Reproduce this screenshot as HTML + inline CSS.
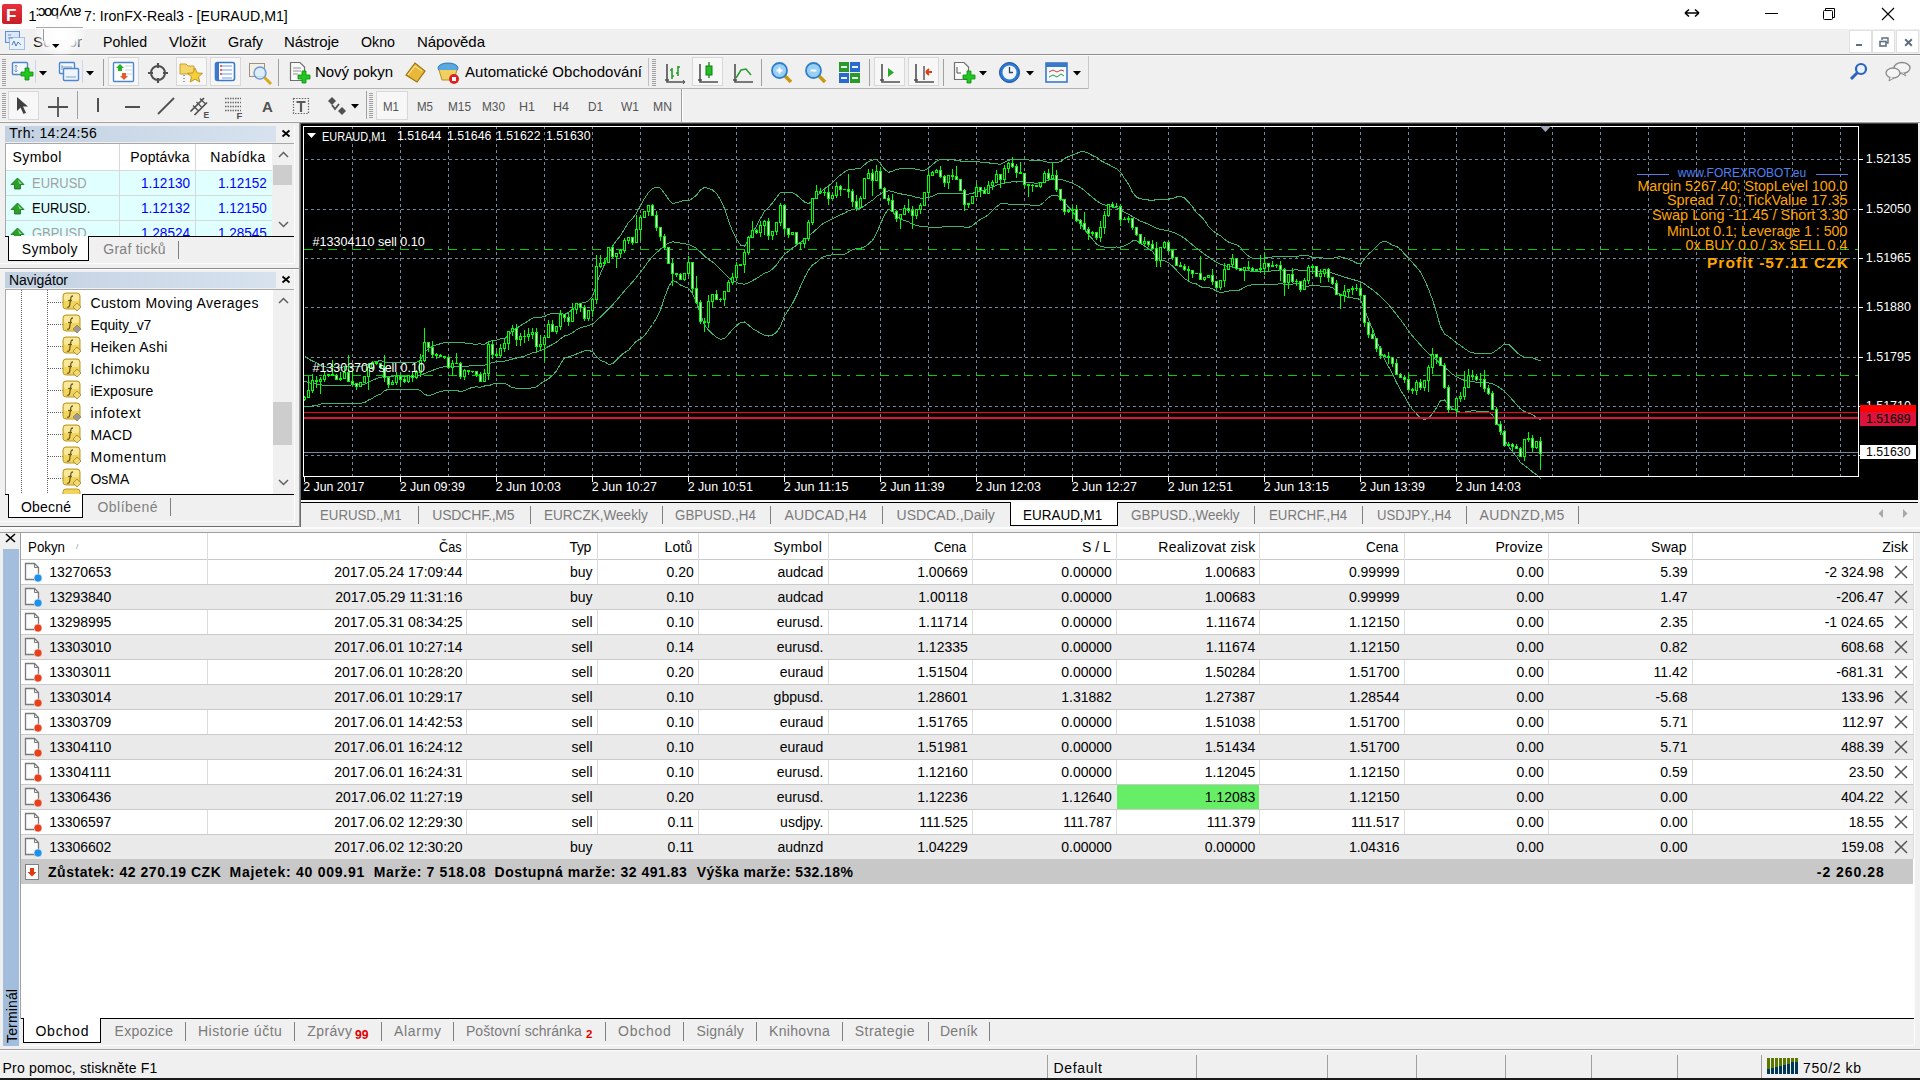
<!DOCTYPE html><html><head><meta charset="utf-8"><style>*{margin:0;padding:0;box-sizing:border-box}
html,body{width:1920px;height:1080px;overflow:hidden}
body{background:#f0f0f0;position:relative;font-family:"Liberation Sans",sans-serif;font-size:14px;color:#000}
.a{position:absolute;white-space:nowrap;line-height:1}
.r{position:absolute}
svg{position:absolute;overflow:visible}
</style></head><body><div class="r" style="left:0px;top:0px;width:1920px;height:29px;background:#fff;"></div>
<div class="r" style="left:2px;top:4px;width:20px;height:20px;background:linear-gradient(#e8303a,#c81e28);border-radius:2px;"></div>
<div class="a" style="left:6.00px;top:6.61px;font-size:17px;color:#fff;font-weight:bold;">F</div>
<div class="a" style="left:28.30px;top:7.60px;font-size:15px;color:#000;">1</div>
<div class="a" style="left:36.5px;top:5.5px;font-size:15px;height:15px;letter-spacing:-1.6px;transform:rotate(180deg);color:#000">boc:</div>
<div class="a" style="left:59.5px;top:5.5px;font-size:15px;height:15px;letter-spacing:-0.6px;transform:rotate(180deg);color:#000">avy</div>
<div class="a" style="left:83.70px;top:7.60px;font-size:15px;transform-origin:0 0;transform:scaleX(0.9440);color:#000;">7: IronFX-Real3 - [EURAUD,M1]</div>
<svg style="left:1684px;top:8px" width="16" height="10" viewBox="0 0 16 10" ><path d="M1 5H15M1 5L5 1.5M1 5L5 8.5M15 5L11 1.5M15 5L11 8.5" stroke="#000" stroke-width="1.6" fill="none"/></svg><div class="r" style="left:1765px;top:13px;width:13px;height:1px;background:#000;"></div><svg style="left:1822px;top:7px" width="14" height="14" viewBox="0 0 14 14" ><path d="M3.5 3.5V1.5H12.5V10.5H10.5" stroke="#000" fill="none"/><rect x="1.5" y="3.5" width="9" height="9" rx="1" stroke="#000" fill="none"/></svg><svg style="left:1881px;top:7px" width="14" height="14" viewBox="0 0 14 14" ><path d="M1 1L13 13M13 1L1 13" stroke="#000" stroke-width="1.1" fill="none"/></svg>
<div class="r" style="left:30px;top:15px;width:60px;height:40px;background:radial-gradient(ellipse 26px 22px at 30px 20px,rgba(255,255,255,1) 0%,rgba(252,252,252,1) 60%,rgba(240,240,240,0) 100%);z-index:5;"></div>
<div class="r" style="left:36px;top:27px;width:47px;height:1px;background:#a8a8a8;z-index:6;"></div>
<div class="r" style="left:43px;top:29px;width:1px;height:12px;background:#9a9a9a;z-index:6;"></div>
<svg style="left:52px;top:44px;z-index:6" width="8" height="5" viewBox="0 0 8 5"><path d="M0 0H7.5L3.75 4Z" fill="#000"/></svg>
<div class="r" style="left:0px;top:54px;width:1920px;height:1px;background:#8e8e8e;"></div>
<div class="r" style="left:0px;top:55px;width:1920px;height:1px;background:#fbfbfb;"></div>
<svg style="left:4px;top:30px" width="24" height="22" viewBox="0 0 24 22" ><rect x="1.5" y="1.5" width="14" height="11" fill="#dbe7f7" stroke="#5b8fd6"/><rect x="5.5" y="7.5" width="15" height="12" fill="#e8f0fb" stroke="#5b8fd6" stroke-dasharray="1 1"/><path d="M8 15L10 11L12 16L14 12L17 15" stroke="#4a7cc4" fill="none"/><path d="M4 5H7M4 8H9" stroke="#6a90c0"/></svg>
<div class="a" style="left:33.00px;top:34.30px;font-size:15px;color:#000;letter-spacing:0.130px;">Soubor</div>
<div class="a" style="left:103.00px;top:34.30px;font-size:15px;transform-origin:0 0;transform:scaleX(0.9422);color:#000;">Pohled</div>
<div class="a" style="left:169.00px;top:34.30px;font-size:15px;color:#000;letter-spacing:0.060px;">Vložit</div>
<div class="a" style="left:228.00px;top:34.30px;font-size:15px;transform-origin:0 0;transform:scaleX(0.9550);color:#000;">Grafy</div>
<div class="a" style="left:284.00px;top:34.30px;font-size:15px;color:#000;letter-spacing:-0.121px;">Nástroje</div>
<div class="a" style="left:361.00px;top:34.30px;font-size:15px;transform-origin:0 0;transform:scaleX(0.9484);color:#000;">Okno</div>
<div class="a" style="left:417.00px;top:34.30px;font-size:15px;color:#000;letter-spacing:-0.057px;">Nápověda</div>
<div class="r" style="left:1849px;top:30px;width:23px;height:23px;background:#fff;border:1px solid #e0e0e0;"></div><div class="r" style="left:1872px;top:30px;width:23px;height:23px;background:#fff;border:1px solid #e0e0e0;"></div><div class="r" style="left:1896px;top:30px;width:23px;height:23px;background:#fff;border:1px solid #e0e0e0;"></div><div class="r" style="left:1856px;top:44px;width:6px;height:2px;background:#5f6f80;"></div><svg style="left:1879px;top:37px" width="10" height="10" viewBox="0 0 10 10" ><rect x="1" y="4.5" width="6" height="4.5" fill="none" stroke="#5f6f80" stroke-width="1.6"/><path d="M3 3V1H9V6H7.5" fill="none" stroke="#5f6f80" stroke-width="1.4"/></svg><svg style="left:1904px;top:38px" width="9" height="9" viewBox="0 0 9 9" ><path d="M1.2 1.2L7.8 7.8M7.8 1.2L1.2 7.8" stroke="#5f6f80" stroke-width="2"/></svg>
<div class="r" style="left:0px;top:88px;width:1089px;height:1px;background:#b4b4b4;"></div>
<div class="r" style="left:0px;top:121px;width:1920px;height:1px;background:#f8f8f8;"></div>
<div class="r" style="left:0px;top:122px;width:1920px;height:1px;background:#a0a0a0;"></div>
<div class="r" style="left:1088px;top:56px;width:1px;height:33px;background:#c8c8c8;"></div><svg style="left:2px;top:59px" width="5" height="27" viewBox="0 0 5 27" ><rect x="0" y="0" width="4" height="1" fill="#a0a0a0"/><rect x="0" y="2" width="4" height="1" fill="#a0a0a0"/><rect x="0" y="4" width="4" height="1" fill="#a0a0a0"/><rect x="0" y="6" width="4" height="1" fill="#a0a0a0"/><rect x="0" y="8" width="4" height="1" fill="#a0a0a0"/><rect x="0" y="10" width="4" height="1" fill="#a0a0a0"/><rect x="0" y="12" width="4" height="1" fill="#a0a0a0"/><rect x="0" y="14" width="4" height="1" fill="#a0a0a0"/><rect x="0" y="16" width="4" height="1" fill="#a0a0a0"/><rect x="0" y="18" width="4" height="1" fill="#a0a0a0"/><rect x="0" y="20" width="4" height="1" fill="#a0a0a0"/><rect x="0" y="22" width="4" height="1" fill="#a0a0a0"/><rect x="0" y="24" width="4" height="1" fill="#a0a0a0"/><rect x="0" y="26" width="4" height="1" fill="#a0a0a0"/></svg><svg style="left:11px;top:61px" width="24" height="22" viewBox="0 0 24 22" ><rect x="1.5" y="1.5" width="15" height="12" rx="1" fill="#f4f8fd" stroke="#4f86cf" stroke-width="1.4"/><path d="M5 4V11M3.5 5.5L5 4L6.5 5.5M3.5 9.5L5 11L6.5 9.5" stroke="#7a9cc8" fill="none"/><path d="M14 7H18V11H22V15H18V19H14V15H10V11H14Z" fill="#1ec81e" stroke="#0c8a0c" stroke-width="0.8"/></svg><div class="r" style="left:35px;top:60px;width:1px;height:23px;background:#c8d8ec;"></div><svg style="left:39px;top:71px" width="8" height="5" viewBox="0 0 8 5" ><path d="M0 0H8L4 4.5Z" fill="#000"/></svg><svg style="left:58px;top:61px" width="24" height="22" viewBox="0 0 24 22" ><rect x="1.5" y="1.5" width="15" height="11" rx="1" fill="#f4f8fd" stroke="#4f86cf" stroke-width="1.4"/><rect x="5.5" y="7.5" width="15" height="12" rx="1" fill="#eef4fc" stroke="#4f86cf" stroke-width="1.4"/><path d="M4 4V9M4 6H14M8 16H18" stroke="#7a9cc8" fill="none"/></svg><div class="r" style="left:82px;top:60px;width:1px;height:23px;background:#c8d8ec;"></div><svg style="left:86px;top:71px" width="8" height="5" viewBox="0 0 8 5" ><path d="M0 0H8L4 4.5Z" fill="#000"/></svg><div class="r" style="left:103px;top:59px;width:1px;height:27px;background:#a0a0a0;"></div><div class="r" style="left:108px;top:57px;width:31px;height:29px;background:#f7f7f7;border:1px solid #d8d8d8;"></div><svg style="left:113px;top:62px" width="21" height="21" viewBox="0 0 21 21" ><rect x="0.5" y="0.5" width="20" height="19" rx="1" fill="#fbfdff" stroke="#4f86cf" stroke-width="1.4"/><path d="M12 4H19M12 8H19M12 12H19" stroke="#c8d4e4"/><path d="M7 2L11 6H9V9H5V6H3Z" fill="#22b422"/><path d="M11 18L15 14H13V11H9V14H7Z" fill="#e85a2a"/></svg><svg style="left:147px;top:62px" width="22" height="22" viewBox="0 0 22 22" ><circle cx="11" cy="11" r="7" fill="none" stroke="#505050" stroke-width="2"/><path d="M11 1V6M11 16V21M1 11H6M16 11H21" stroke="#505050" stroke-width="2.2"/></svg><div class="r" style="left:176px;top:57px;width:31px;height:29px;background:#f7f7f7;border:1px solid #d8d8d8;"></div><svg style="left:179px;top:61px" width="25" height="24" viewBox="0 0 25 24" ><path d="M1 3H7L9 5H15V13H1Z" fill="#f5d66a" stroke="#c8a030"/><path d="M5 14V22" stroke="#444" stroke-dasharray="1 2"/><path d="M16 7L18.3 12L23.5 12.3L19.5 15.8L20.8 21L16 18.2L11.2 21L12.5 15.8L8.5 12.3L13.7 12Z" fill="#f4cf3a" stroke="#b8901c" stroke-width="0.9"/></svg><div class="r" style="left:210px;top:57px;width:31px;height:29px;background:#f7f7f7;border:1px solid #d8d8d8;"></div><svg style="left:214px;top:61px" width="23" height="22" viewBox="0 0 23 22" ><rect x="1.5" y="1.5" width="19" height="18" rx="2" fill="#fafcff" stroke="#3c78c8" stroke-width="1.6"/><rect x="2" y="2" width="3" height="17" fill="#3c78c8"/><path d="M8 5H18M8 9H18M8 13H18M8 17H18" stroke="#7aa0d8"/><path d="M6 5H8M6 9H8M6 13H8" stroke="#e03030" stroke-width="1.4"/></svg><svg style="left:248px;top:62px" width="25" height="23" viewBox="0 0 25 23" ><rect x="1.5" y="1.5" width="15" height="13" fill="#f4f0e8" stroke="#a09080"/><circle cx="12" cy="11" r="6" fill="#d8ecff" fill-opacity="0.8" stroke="#6a9ad0" stroke-width="1.4"/><path d="M16.5 15.5L23 22" stroke="#d8a820" stroke-width="3"/></svg><div class="r" style="left:278px;top:59px;width:1px;height:27px;background:#a0a0a0;"></div><svg style="left:289px;top:61px" width="23" height="24" viewBox="0 0 23 24" ><path d="M1.5 1.5H11L15.5 6V19.5H1.5Z" fill="#fafafa" stroke="#707070" stroke-width="1.2"/><path d="M4 7H12M4 10H12M4 13H9" stroke="#909090"/><path d="M13 10H17V14H21V18H17V22H13V18H9V14H13Z" fill="#1ec81e" stroke="#0c8a0c" stroke-width="0.8"/></svg><div class="a" style="left:315.00px;top:64.30px;font-size:15px;color:#000;letter-spacing:-0.039px;">Nový pokyn</div><svg style="left:404px;top:61px" width="23" height="22" viewBox="0 0 23 22" ><path d="M2 14L11 2L21 10L13 21Z" fill="#e8b838" stroke="#a07010" stroke-width="1.2"/><path d="M4 14L11 5L18 10" fill="none" stroke="#fff0b0"/></svg><svg style="left:436px;top:61px" width="25" height="24" viewBox="0 0 25 24" ><ellipse cx="12" cy="7" rx="10" ry="5" fill="#5aa8e0" stroke="#2a78b8"/><path d="M3 9L6 19H18L21 9" fill="#f0d060" stroke="#b89020"/><circle cx="18" cy="18" r="5" fill="#e02020"/><rect x="16" y="16" width="4" height="4" fill="#fff"/></svg><div class="a" style="left:465.00px;top:64.30px;font-size:15px;color:#000;letter-spacing:0.048px;">Automatické Obchodování</div><div class="r" style="left:648px;top:58px;width:1px;height:28px;background:#c0c0c0;"></div><svg style="left:652px;top:59px" width="5" height="27" viewBox="0 0 5 27" ><rect x="0" y="0" width="4" height="1" fill="#a0a0a0"/><rect x="0" y="2" width="4" height="1" fill="#a0a0a0"/><rect x="0" y="4" width="4" height="1" fill="#a0a0a0"/><rect x="0" y="6" width="4" height="1" fill="#a0a0a0"/><rect x="0" y="8" width="4" height="1" fill="#a0a0a0"/><rect x="0" y="10" width="4" height="1" fill="#a0a0a0"/><rect x="0" y="12" width="4" height="1" fill="#a0a0a0"/><rect x="0" y="14" width="4" height="1" fill="#a0a0a0"/><rect x="0" y="16" width="4" height="1" fill="#a0a0a0"/><rect x="0" y="18" width="4" height="1" fill="#a0a0a0"/><rect x="0" y="20" width="4" height="1" fill="#a0a0a0"/><rect x="0" y="22" width="4" height="1" fill="#a0a0a0"/><rect x="0" y="24" width="4" height="1" fill="#a0a0a0"/><rect x="0" y="26" width="4" height="1" fill="#a0a0a0"/></svg><svg style="left:664px;top:63px" width="22" height="21" viewBox="0 0 22 21" ><path d="M3 1V19H21M1 17H5" stroke="#505050" stroke-width="1.6" fill="none"/><path d="M8 5V16M6 7H8M8 13H10M14 3V13M12 10H14M14 4H16" stroke="#2a9a2a" stroke-width="1.6" fill="none"/><path d="M19 17L21 19L19 21" stroke="#505050" fill="none"/></svg><div class="r" style="left:692px;top:57px;width:31px;height:29px;background:#f7f7f7;border:1px solid #d8d8d8;"></div><svg style="left:697px;top:61px" width="22" height="23" viewBox="0 0 22 23" ><path d="M3 3V21H21M1 19H5" stroke="#505050" stroke-width="1.6" fill="none"/><path d="M12 1V17" stroke="#1a8a1a" stroke-width="1.4"/><rect x="9" y="5" width="6" height="9" fill="#22c022" stroke="#138013"/></svg><svg style="left:732px;top:63px" width="22" height="21" viewBox="0 0 22 21" ><path d="M3 1V19H21M1 17H5" stroke="#505050" stroke-width="1.6" fill="none"/><path d="M4 15L9 7L14 6L19 12" stroke="#2a9a2a" stroke-width="1.5" fill="none"/></svg><div class="r" style="left:761px;top:59px;width:1px;height:27px;background:#a0a0a0;"></div><svg style="left:770px;top:61px" width="23" height="23" viewBox="0 0 23 23" ><path d="M14 14L21 21" stroke="#c89810" stroke-width="3.5"/><circle cx="9.5" cy="9.5" r="7.5" fill="#9ad0f4" stroke="#2f7fc8" stroke-width="1.8"/><path d="M6.5 9.5H12.5M9.5 6.5V12.5" stroke="#fff" stroke-width="2"/></svg><svg style="left:804px;top:61px" width="23" height="23" viewBox="0 0 23 23" ><path d="M14 14L21 21" stroke="#c89810" stroke-width="3.5"/><circle cx="9.5" cy="9.5" r="7.5" fill="#9ad0f4" stroke="#2f7fc8" stroke-width="1.8"/><path d="M6.5 9.5H12.5" stroke="#fff" stroke-width="2"/></svg><svg style="left:838px;top:61px" width="23" height="23" viewBox="0 0 23 23" ><rect x="1" y="1" width="10" height="10" fill="#2a9a2a"/><rect x="12" y="1" width="10" height="10" fill="#2a6ad0"/><rect x="1" y="12" width="10" height="10" fill="#2a6ad0"/><rect x="12" y="12" width="10" height="10" fill="#2a9a2a"/><path d="M3 6H9M14 6H20M3 17H9M14 17H20" stroke="#e8f4e8" stroke-width="1.8"/></svg><div class="r" style="left:869px;top:59px;width:1px;height:27px;background:#a0a0a0;"></div><div class="r" style="left:874px;top:57px;width:31px;height:29px;background:#f7f7f7;border:1px solid #d8d8d8;"></div><svg style="left:879px;top:63px" width="22" height="21" viewBox="0 0 22 21" ><path d="M3 1V19H21M1 17H5" stroke="#505050" stroke-width="1.6" fill="none"/><path d="M9 5V14L15 9.5Z" fill="#2aaa2a"/></svg><div class="r" style="left:908px;top:57px;width:31px;height:29px;background:#f7f7f7;border:1px solid #d8d8d8;"></div><svg style="left:913px;top:63px" width="22" height="21" viewBox="0 0 22 21" ><path d="M3 1V19H21M1 17H5" stroke="#505050" stroke-width="1.6" fill="none"/><path d="M11 3V17" stroke="#505050" stroke-width="1.4"/><path d="M19 9H13M13 9L16 6M13 9L16 12" stroke="#e03a10" stroke-width="1.8" fill="none"/></svg><div class="r" style="left:943px;top:59px;width:1px;height:27px;background:#a0a0a0;"></div><svg style="left:953px;top:61px" width="24" height="24" viewBox="0 0 24 24" ><path d="M1.5 1.5H11L15.5 6V18.5H1.5Z" fill="#fafafa" stroke="#707070" stroke-width="1.2"/><path d="M4 6V12H8" stroke="#505050" fill="none"/><path d="M14 10H18V14H22V18H18V22H14V18H10V14H14Z" fill="#1ec81e" stroke="#0c8a0c" stroke-width="0.8"/></svg><svg style="left:979px;top:71px" width="8" height="5" viewBox="0 0 8 5" ><path d="M0 0H8L4 4.5Z" fill="#000"/></svg><svg style="left:998px;top:61px" width="23" height="23" viewBox="0 0 23 23" ><circle cx="11.5" cy="11.5" r="10" fill="#2a7ad8" stroke="#1a4a90"/><circle cx="11.5" cy="11.5" r="7" fill="#f0f6ff"/><path d="M11.5 6V11.5H15" stroke="#404040" stroke-width="1.3" fill="none"/></svg><svg style="left:1026px;top:71px" width="8" height="5" viewBox="0 0 8 5" ><path d="M0 0H8L4 4.5Z" fill="#000"/></svg><svg style="left:1045px;top:62px" width="23" height="21" viewBox="0 0 23 21" ><rect x="1" y="1" width="21" height="19" fill="#f4f8ff" stroke="#3a78c8" stroke-width="1.6"/><rect x="1" y="1" width="21" height="4" fill="#3a78c8"/><path d="M4 10L8 8L12 10L16 8L19 9" stroke="#d04020" fill="none"/><path d="M4 15L8 13L12 15L16 12L19 14" stroke="#2a9a2a" fill="none"/></svg><svg style="left:1073px;top:71px" width="8" height="5" viewBox="0 0 8 5" ><path d="M0 0H8L4 4.5Z" fill="#000"/></svg><svg style="left:1849px;top:62px" width="19" height="19" viewBox="0 0 19 19" ><circle cx="12" cy="7" r="5" fill="#eaf2ff" stroke="#2a62c0" stroke-width="2.2"/><path d="M8.5 10.5L2 17" stroke="#2a62c0" stroke-width="3"/></svg><svg style="left:1884px;top:61px" width="28" height="21" viewBox="0 0 28 21" ><ellipse cx="18" cy="7" rx="8" ry="5.5" fill="#f4f4f4" stroke="#8a8a8a" stroke-width="1.3"/><path d="M20 12L22 15L17 12" fill="#f4f4f4" stroke="#8a8a8a"/><ellipse cx="9" cy="12" rx="7" ry="5" fill="#f4f4f4" stroke="#8a8a8a" stroke-width="1.3"/><path d="M6 16L5 20L10 17" fill="#f4f4f4" stroke="#8a8a8a"/></svg>
<div class="r" style="left:681px;top:89px;width:1px;height:33px;background:#a0a0a0;"></div><div class="r" style="left:682px;top:89px;width:1px;height:33px;background:#fff;"></div><svg style="left:2px;top:93px" width="5" height="26" viewBox="0 0 5 26" ><rect x="0" y="0" width="4" height="1" fill="#a0a0a0"/><rect x="0" y="2" width="4" height="1" fill="#a0a0a0"/><rect x="0" y="4" width="4" height="1" fill="#a0a0a0"/><rect x="0" y="6" width="4" height="1" fill="#a0a0a0"/><rect x="0" y="8" width="4" height="1" fill="#a0a0a0"/><rect x="0" y="10" width="4" height="1" fill="#a0a0a0"/><rect x="0" y="12" width="4" height="1" fill="#a0a0a0"/><rect x="0" y="14" width="4" height="1" fill="#a0a0a0"/><rect x="0" y="16" width="4" height="1" fill="#a0a0a0"/><rect x="0" y="18" width="4" height="1" fill="#a0a0a0"/><rect x="0" y="20" width="4" height="1" fill="#a0a0a0"/><rect x="0" y="22" width="4" height="1" fill="#a0a0a0"/><rect x="0" y="24" width="4" height="1" fill="#a0a0a0"/></svg><div class="r" style="left:8px;top:91px;width:31px;height:29px;background:#f7f7f7;border:1px solid #d8d8d8;"></div><svg style="left:14px;top:96px" width="16" height="20" viewBox="0 0 16 20" ><path d="M3 1L3 15L6.5 11.5L9.5 18L12 16.8L9 10.5H14Z" fill="#404040"/></svg><svg style="left:47px;top:96px" width="22" height="22" viewBox="0 0 22 22" ><path d="M11 1V21M1 11H21" stroke="#505050" stroke-width="1.8"/></svg><div class="r" style="left:77px;top:91px;width:1px;height:28px;background:#a0a0a0;"></div><div class="r" style="left:97px;top:98px;width:2px;height:14px;background:#505050;"></div><div class="r" style="left:125px;top:106px;width:15px;height:2px;background:#505050;"></div><svg style="left:157px;top:97px" width="18" height="18" viewBox="0 0 18 18" ><path d="M1 17L17 1" stroke="#505050" stroke-width="1.8"/></svg><svg style="left:189px;top:96px" width="22" height="23" viewBox="0 0 22 23" ><path d="M1.5 15.5L15 2M5.5 19L18 6.5" stroke="#505050" stroke-width="1.7"/><path d="M4 9.5L9 14.5M7.5 6L12.5 11M11 2.5L16 7.5" stroke="#505050" stroke-width="1.3"/><text x="14.5" y="22" font-size="8.5" font-weight="bold" fill="#505050" font-family="Liberation Sans">E</text></svg><svg style="left:224px;top:96px" width="22" height="24" viewBox="0 0 22 24" ><path d="M1 2.5H17" stroke="#6a6a6a" stroke-width="1.5" stroke-dasharray="1.5 1"/><path d="M1 6.5H17" stroke="#6a6a6a" stroke-width="1.5" stroke-dasharray="1.5 1"/><path d="M1 10.5H17" stroke="#6a6a6a" stroke-width="1.5" stroke-dasharray="1.5 1"/><path d="M1 14.5H17" stroke="#6a6a6a" stroke-width="1.5" stroke-dasharray="1.5 1"/><text x="12.5" y="22.5" font-size="9.5" font-weight="bold" fill="#505050" font-family="Liberation Sans">F</text></svg><div class="a" style="left:262.00px;top:99.30px;font-size:15px;color:#505050;font-weight:bold;">A</div><svg style="left:292px;top:97px" width="19" height="19" viewBox="0 0 19 19" ><rect x="1.5" y="1.5" width="15" height="15" fill="none" stroke="#606060" stroke-width="1.2" stroke-dasharray="1.4 1.4"/><path d="M4.5 5H13.5M9 5V15" stroke="#5a5a5a" stroke-width="2.2"/></svg><svg style="left:327px;top:96px" width="20" height="21" viewBox="0 0 20 21" ><path d="M5 1L9 5L5 9L1 5Z" fill="#505050"/><path d="M15 11L19 15L15 19L11 15Z" fill="#505050"/><path d="M5 9L8 13L12 8" stroke="#505050" stroke-width="1.8" fill="none"/></svg><svg style="left:351px;top:104px" width="8" height="5" viewBox="0 0 8 5" ><path d="M0 0H8L4 4.5Z" fill="#000"/></svg><div class="r" style="left:366px;top:91px;width:1px;height:28px;background:#a0a0a0;"></div><svg style="left:369px;top:93px" width="5" height="26" viewBox="0 0 5 26" ><rect x="0" y="0" width="4" height="1" fill="#a0a0a0"/><rect x="0" y="2" width="4" height="1" fill="#a0a0a0"/><rect x="0" y="4" width="4" height="1" fill="#a0a0a0"/><rect x="0" y="6" width="4" height="1" fill="#a0a0a0"/><rect x="0" y="8" width="4" height="1" fill="#a0a0a0"/><rect x="0" y="10" width="4" height="1" fill="#a0a0a0"/><rect x="0" y="12" width="4" height="1" fill="#a0a0a0"/><rect x="0" y="14" width="4" height="1" fill="#a0a0a0"/><rect x="0" y="16" width="4" height="1" fill="#a0a0a0"/><rect x="0" y="18" width="4" height="1" fill="#a0a0a0"/><rect x="0" y="20" width="4" height="1" fill="#a0a0a0"/><rect x="0" y="22" width="4" height="1" fill="#a0a0a0"/><rect x="0" y="24" width="4" height="1" fill="#a0a0a0"/></svg><div class="r" style="left:376px;top:91px;width:32px;height:29px;background:#f7f7f7;border:1px solid #d8d8d8;"></div><div class="a" style="left:383.00px;top:100.30px;font-size:13px;transform-origin:0 0;transform:scaleX(0.8864);color:#555;">M1</div><div class="a" style="left:417.00px;top:100.30px;font-size:13px;transform-origin:0 0;transform:scaleX(0.8864);color:#555;">M5</div><div class="a" style="left:448.00px;top:100.30px;font-size:13px;transform-origin:0 0;transform:scaleX(0.9091);color:#555;">M15</div><div class="a" style="left:482.00px;top:100.30px;font-size:13px;transform-origin:0 0;transform:scaleX(0.9091);color:#555;">M30</div><div class="a" style="left:519.00px;top:100.30px;font-size:13px;transform-origin:0 0;transform:scaleX(0.9639);color:#555;">H1</div><div class="a" style="left:553.00px;top:100.30px;font-size:13px;transform-origin:0 0;transform:scaleX(0.9639);color:#555;">H4</div><div class="a" style="left:588.00px;top:100.30px;font-size:13px;transform-origin:0 0;transform:scaleX(0.9036);color:#555;">D1</div><div class="a" style="left:621.00px;top:100.30px;font-size:13px;transform-origin:0 0;transform:scaleX(0.9231);color:#555;">W1</div><div class="a" style="left:653.00px;top:100.30px;font-size:13px;transform-origin:0 0;transform:scaleX(0.9406);color:#555;">MN</div>
<div class="r" style="left:0px;top:123px;width:300px;height:145px;background:#f0f0f0;"></div><div class="r" style="left:5px;top:126px;width:271px;height:16px;background:linear-gradient(90deg,#c2d1e2,#d7e2ee);"></div><div class="a" style="left:9.20px;top:126.15px;font-size:14px;color:#000;letter-spacing:0.396px;">Trh: 14:24:56</div><svg style="left:281px;top:129px" width="10" height="9" viewBox="0 0 10 9" ><path d="M1.5 1.5L8.5 7.5M8.5 1.5L1.5 7.5" stroke="#000" stroke-width="1.8"/></svg><div class="r" style="left:5px;top:143px;width:290px;height:94px;background:#fff;border:1px solid #a8a8a8;border-right:none;border-bottom:none"></div><div class="r" style="left:6px;top:144px;width:266px;height:26px;background:#fff;"></div><div class="r" style="left:6px;top:170px;width:266px;height:67px;background:#e0ffff;"></div><div class="r" style="left:119px;top:144px;width:1px;height:93px;background:#d8d8d8;"></div><div class="r" style="left:195px;top:144px;width:1px;height:93px;background:#d8d8d8;"></div><div class="r" style="left:6px;top:170px;width:266px;height:1px;background:#d8d8d8;"></div><div class="r" style="left:6px;top:195px;width:266px;height:1px;background:#d8d8d8;"></div><div class="r" style="left:6px;top:220px;width:266px;height:1px;background:#d8d8d8;"></div><div class="a" style="left:12.50px;top:150.15px;font-size:14px;color:#000;letter-spacing:0.420px;">Symbol</div><div class="a" style="left:130.30px;top:150.15px;font-size:14px;color:#000;letter-spacing:0.114px;">Poptávka</div><div class="a" style="left:210.30px;top:150.15px;font-size:14px;color:#000;letter-spacing:0.475px;">Nabídka</div><svg style="left:10px;top:177px" width="15" height="14" viewBox="0 0 15 14" ><path d="M7.5 1L14 7.5H10.5V12H4.5V7.5H1Z" fill="#2aa02a" stroke="#157015" stroke-width="0.8"/><path d="M7.5 2.5L12 7H9.5" fill="#8ee08e"/></svg><div class="a" style="left:31.70px;top:176.15px;font-size:14px;transform-origin:0 0;transform:scaleX(0.9239);color:#a0a0a0;">EURUSD</div><div class="a" style="left:141.30px;top:176.15px;font-size:14px;transform-origin:0 0;transform:scaleX(0.9684);color:#0000ff;">1.12130</div><div class="a" style="left:217.50px;top:176.15px;font-size:14px;transform-origin:0 0;transform:scaleX(0.9644);color:#0000ff;">1.12152</div><svg style="left:10px;top:202px" width="15" height="14" viewBox="0 0 15 14" ><path d="M7.5 1L14 7.5H10.5V12H4.5V7.5H1Z" fill="#2aa02a" stroke="#157015" stroke-width="0.8"/><path d="M7.5 2.5L12 7H9.5" fill="#8ee08e"/></svg><div class="a" style="left:31.70px;top:201.15px;font-size:14px;transform-origin:0 0;transform:scaleX(0.9254);color:#000;">EURUSD.</div><div class="a" style="left:141.30px;top:201.15px;font-size:14px;transform-origin:0 0;transform:scaleX(0.9684);color:#0000ff;">1.12132</div><div class="a" style="left:217.50px;top:201.15px;font-size:14px;transform-origin:0 0;transform:scaleX(0.9644);color:#0000ff;">1.12150</div><svg style="left:10px;top:227px" width="15" height="14" viewBox="0 0 15 14" ><path d="M7.5 1L14 7.5H10.5V12H4.5V7.5H1Z" fill="#2aa02a" stroke="#157015" stroke-width="0.8"/><path d="M7.5 2.5L12 7H9.5" fill="#8ee08e"/></svg><div class="a" style="left:31.70px;top:226.15px;font-size:14px;transform-origin:0 0;transform:scaleX(0.9231);color:#a0a0a0;">GBPUSD</div><div class="a" style="left:141.30px;top:226.15px;font-size:14px;transform-origin:0 0;transform:scaleX(0.9684);color:#0000ff;">1.28524</div><div class="a" style="left:217.50px;top:226.15px;font-size:14px;transform-origin:0 0;transform:scaleX(0.9644);color:#0000ff;">1.28545</div><div class="r" style="left:5px;top:236px;width:290px;height:27px;background:#f0f0f0;"></div><div class="r" style="left:5px;top:236px;width:290px;height:1px;background:#000;"></div><div class="r" style="left:272px;top:144px;width:22px;height:92px;background:#f0f0f0;"></div><svg style="left:278px;top:151px" width="11" height="7" viewBox="0 0 11 7" ><path d="M1 6L5.5 1.5L10 6" stroke="#606060" stroke-width="1.5" fill="none"/></svg><svg style="left:278px;top:221px" width="11" height="7" viewBox="0 0 11 7" ><path d="M1 1L5.5 5.5L10 1" stroke="#606060" stroke-width="1.5" fill="none"/></svg><div class="r" style="left:273px;top:165px;width:19px;height:20px;background:#cdcdcd;"></div><div class="r" style="left:8px;top:236px;width:81px;height:25px;background:#fff;border:1px solid #000;border-top:none;"></div><div class="a" style="left:21.70px;top:242.15px;font-size:14px;color:#000;letter-spacing:0.350px;">Symboly</div><div class="a" style="left:103.30px;top:242.15px;font-size:14px;color:#808080;letter-spacing:0.256px;">Graf ticků</div><div class="r" style="left:178px;top:241px;width:1px;height:18px;background:#808080;"></div><div class="r" style="left:0px;top:263px;width:295px;height:1px;background:#fcfcfc;"></div><div class="r" style="left:294px;top:126px;width:1px;height:138px;background:#fcfcfc;"></div><div class="r" style="left:0px;top:268px;width:300px;height:1px;background:#8c8c8c;"></div><div class="r" style="left:0px;top:269px;width:300px;height:1px;background:#fcfcfc;"></div>
<div class="r" style="left:5px;top:272px;width:271px;height:16px;background:linear-gradient(90deg,#c2d1e2,#d7e2ee);"></div><div class="a" style="left:9.00px;top:273.15px;font-size:14px;color:#000;letter-spacing:-0.112px;">Navigátor</div><svg style="left:281px;top:275px" width="10" height="9" viewBox="0 0 10 9" ><path d="M1.5 1.5L8.5 7.5M8.5 1.5L1.5 7.5" stroke="#000" stroke-width="1.8"/></svg><div class="r" style="left:5px;top:289px;width:290px;height:206px;background:#fff;border-left:1px solid #a8a8a8;border-top:1px solid #a8a8a8;"></div><svg style="left:6px;top:290px" width="60" height="205" viewBox="0 0 60 205" ><path d="M15.5 0V205M41.5 0V205" stroke="#606060" stroke-dasharray="1 1"/><path d="M42 12.5H57" stroke="#606060" stroke-dasharray="1 1"/><path d="M42 34.5H57" stroke="#606060" stroke-dasharray="1 1"/><path d="M42 56.5H57" stroke="#606060" stroke-dasharray="1 1"/><path d="M42 78.5H57" stroke="#606060" stroke-dasharray="1 1"/><path d="M42 100.5H57" stroke="#606060" stroke-dasharray="1 1"/><path d="M42 122.5H57" stroke="#606060" stroke-dasharray="1 1"/><path d="M42 144.5H57" stroke="#606060" stroke-dasharray="1 1"/><path d="M42 166.5H57" stroke="#606060" stroke-dasharray="1 1"/><path d="M42 188.5H57" stroke="#606060" stroke-dasharray="1 1"/></svg><svg style="left:62px;top:292px" width="21" height="20" viewBox="0 0 21 20" ><rect x="1" y="1" width="17" height="16" rx="3" fill="#f2d45a" stroke="#b8982a"/><rect x="2" y="2" width="15" height="7" rx="2" fill="#fae89a"/><path d="M11 4C9 4 9 5 8.5 8L7.5 14C7 15.5 6 15.5 5 15" stroke="#6a5a20" stroke-width="1.3" fill="none"/><path d="M6 8.5H10" stroke="#6a5a20" stroke-width="1.2"/><path d="M15 11L19 15L15 19L11 15Z" fill="#f4d870" stroke="#9a8030" stroke-width="0.8"/></svg><div class="a" style="left:90.40px;top:296.15px;font-size:14px;color:#000;letter-spacing:0.417px;">Custom Moving Averages</div><svg style="left:62px;top:314px" width="21" height="20" viewBox="0 0 21 20" ><rect x="1" y="1" width="17" height="16" rx="3" fill="#f2d45a" stroke="#b8982a"/><rect x="2" y="2" width="15" height="7" rx="2" fill="#fae89a"/><path d="M11 4C9 4 9 5 8.5 8L7.5 14C7 15.5 6 15.5 5 15" stroke="#6a5a20" stroke-width="1.3" fill="none"/><path d="M6 8.5H10" stroke="#6a5a20" stroke-width="1.2"/><path d="M15 11L19 15L15 19L11 15Z" fill="#9a9a9a" stroke="#9a8030" stroke-width="0.8"/></svg><div class="a" style="left:90.40px;top:318.15px;font-size:14px;color:#000;letter-spacing:-0.062px;">Equity_v7</div><svg style="left:62px;top:336px" width="21" height="20" viewBox="0 0 21 20" ><rect x="1" y="1" width="17" height="16" rx="3" fill="#f2d45a" stroke="#b8982a"/><rect x="2" y="2" width="15" height="7" rx="2" fill="#fae89a"/><path d="M11 4C9 4 9 5 8.5 8L7.5 14C7 15.5 6 15.5 5 15" stroke="#6a5a20" stroke-width="1.3" fill="none"/><path d="M6 8.5H10" stroke="#6a5a20" stroke-width="1.2"/><path d="M15 11L19 15L15 19L11 15Z" fill="#f4d870" stroke="#9a8030" stroke-width="0.8"/></svg><div class="a" style="left:90.40px;top:340.15px;font-size:14px;color:#000;letter-spacing:0.305px;">Heiken Ashi</div><svg style="left:62px;top:358px" width="21" height="20" viewBox="0 0 21 20" ><rect x="1" y="1" width="17" height="16" rx="3" fill="#f2d45a" stroke="#b8982a"/><rect x="2" y="2" width="15" height="7" rx="2" fill="#fae89a"/><path d="M11 4C9 4 9 5 8.5 8L7.5 14C7 15.5 6 15.5 5 15" stroke="#6a5a20" stroke-width="1.3" fill="none"/><path d="M6 8.5H10" stroke="#6a5a20" stroke-width="1.2"/><path d="M15 11L19 15L15 19L11 15Z" fill="#f4d870" stroke="#9a8030" stroke-width="0.8"/></svg><div class="a" style="left:90.40px;top:362.15px;font-size:14px;color:#000;letter-spacing:0.429px;">Ichimoku</div><svg style="left:62px;top:380px" width="21" height="20" viewBox="0 0 21 20" ><rect x="1" y="1" width="17" height="16" rx="3" fill="#f2d45a" stroke="#b8982a"/><rect x="2" y="2" width="15" height="7" rx="2" fill="#fae89a"/><path d="M11 4C9 4 9 5 8.5 8L7.5 14C7 15.5 6 15.5 5 15" stroke="#6a5a20" stroke-width="1.3" fill="none"/><path d="M6 8.5H10" stroke="#6a5a20" stroke-width="1.2"/><path d="M15 11L19 15L15 19L11 15Z" fill="#f4d870" stroke="#9a8030" stroke-width="0.8"/></svg><div class="a" style="left:90.40px;top:384.15px;font-size:14px;color:#000;letter-spacing:0.094px;">iExposure</div><svg style="left:62px;top:402px" width="21" height="20" viewBox="0 0 21 20" ><rect x="1" y="1" width="17" height="16" rx="3" fill="#f2d45a" stroke="#b8982a"/><rect x="2" y="2" width="15" height="7" rx="2" fill="#fae89a"/><path d="M11 4C9 4 9 5 8.5 8L7.5 14C7 15.5 6 15.5 5 15" stroke="#6a5a20" stroke-width="1.3" fill="none"/><path d="M6 8.5H10" stroke="#6a5a20" stroke-width="1.2"/><path d="M15 11L19 15L15 19L11 15Z" fill="#9a9a9a" stroke="#9a8030" stroke-width="0.8"/></svg><div class="a" style="left:90.40px;top:406.15px;font-size:14px;color:#000;letter-spacing:0.721px;">infotext</div><svg style="left:62px;top:424px" width="21" height="20" viewBox="0 0 21 20" ><rect x="1" y="1" width="17" height="16" rx="3" fill="#f2d45a" stroke="#b8982a"/><rect x="2" y="2" width="15" height="7" rx="2" fill="#fae89a"/><path d="M11 4C9 4 9 5 8.5 8L7.5 14C7 15.5 6 15.5 5 15" stroke="#6a5a20" stroke-width="1.3" fill="none"/><path d="M6 8.5H10" stroke="#6a5a20" stroke-width="1.2"/><path d="M15 11L19 15L15 19L11 15Z" fill="#f4d870" stroke="#9a8030" stroke-width="0.8"/></svg><div class="a" style="left:90.40px;top:428.15px;font-size:14px;color:#000;letter-spacing:0.167px;">MACD</div><svg style="left:62px;top:446px" width="21" height="20" viewBox="0 0 21 20" ><rect x="1" y="1" width="17" height="16" rx="3" fill="#f2d45a" stroke="#b8982a"/><rect x="2" y="2" width="15" height="7" rx="2" fill="#fae89a"/><path d="M11 4C9 4 9 5 8.5 8L7.5 14C7 15.5 6 15.5 5 15" stroke="#6a5a20" stroke-width="1.3" fill="none"/><path d="M6 8.5H10" stroke="#6a5a20" stroke-width="1.2"/><path d="M15 11L19 15L15 19L11 15Z" fill="#f4d870" stroke="#9a8030" stroke-width="0.8"/></svg><div class="a" style="left:90.40px;top:450.15px;font-size:14px;color:#000;letter-spacing:0.829px;">Momentum</div><svg style="left:62px;top:468px" width="21" height="20" viewBox="0 0 21 20" ><rect x="1" y="1" width="17" height="16" rx="3" fill="#f2d45a" stroke="#b8982a"/><rect x="2" y="2" width="15" height="7" rx="2" fill="#fae89a"/><path d="M11 4C9 4 9 5 8.5 8L7.5 14C7 15.5 6 15.5 5 15" stroke="#6a5a20" stroke-width="1.3" fill="none"/><path d="M6 8.5H10" stroke="#6a5a20" stroke-width="1.2"/><path d="M15 11L19 15L15 19L11 15Z" fill="#f4d870" stroke="#9a8030" stroke-width="0.8"/></svg><div class="a" style="left:90.40px;top:472.15px;font-size:14px;color:#000;letter-spacing:0.033px;">OsMA</div><svg style="left:62px;top:488px" width="21" height="7" viewBox="0 0 21 7" ><rect x="1" y="1" width="17" height="16" rx="3" fill="#f2d45a" stroke="#b8982a"/></svg><div class="r" style="left:273px;top:290px;width:21px;height:205px;background:#f0f0f0;"></div><svg style="left:278px;top:297px" width="11" height="7" viewBox="0 0 11 7" ><path d="M1 6L5.5 1.5L10 6" stroke="#606060" stroke-width="1.5" fill="none"/></svg><svg style="left:278px;top:479px" width="11" height="7" viewBox="0 0 11 7" ><path d="M1 1L5.5 5.5L10 1" stroke="#606060" stroke-width="1.5" fill="none"/></svg><div class="r" style="left:273px;top:402px;width:19px;height:43px;background:#cdcdcd;"></div><div class="r" style="left:5px;top:494px;width:290px;height:1px;background:#000;"></div><div class="r" style="left:8px;top:494px;width:75px;height:24px;background:#fff;border:1px solid #000;border-top:none;"></div><div class="a" style="left:21.00px;top:500.15px;font-size:14px;color:#000;letter-spacing:0.190px;">Obecné</div><div class="a" style="left:97.40px;top:499.65px;font-size:14px;color:#808080;letter-spacing:0.486px;">Oblíbené</div><div class="r" style="left:170px;top:498px;width:1px;height:18px;background:#808080;"></div><div class="r" style="left:0px;top:521px;width:295px;height:1px;background:#fcfcfc;"></div><div class="r" style="left:294px;top:270px;width:1px;height:252px;background:#fcfcfc;"></div><div class="r" style="left:0px;top:526px;width:301px;height:1px;background:#6e6e6e;"></div><div class="r" style="left:299px;top:123px;width:1px;height:404px;background:#9a9a9a;"></div><div class="r" style="left:300px;top:123px;width:1px;height:404px;background:#6a6a6a;"></div>
<div class="r" style="left:301px;top:123px;width:1617px;height:1px;background:#404040;"></div>
<svg width="1617" height="377" viewBox="301 124 1617 377" style="position:absolute;left:301px;top:124px" shape-rendering="crispEdges">
<rect x="301" y="124" width="1617" height="377" fill="#000"/>
<path d="M352.5 127V476 M400.5 127V476 M448.5 127V476 M496.5 127V476 M544.5 127V476 M592.5 127V476 M640.5 127V476 M688.5 127V476 M736.5 127V476 M784.5 127V476 M832.5 127V476 M880.5 127V476 M928.5 127V476 M976.5 127V476 M1024.5 127V476 M1072.5 127V476 M1120.5 127V476 M1168.5 127V476 M1216.5 127V476 M1264.5 127V476 M1312.5 127V476 M1360.5 127V476 M1408.5 127V476 M1456.5 127V476 M1504.5 127V476 M1552.5 127V476 M1600.5 127V476 M1648.5 127V476 M1696.5 127V476 M1744.5 127V476 M1792.5 127V476 M1840.5 127V476" stroke="#778899" stroke-width="1" stroke-dasharray="3 3" stroke-dashoffset="1" fill="none"/>
<path d="M304 159.5H1858 M304 209.5H1858 M304 258.5H1858 M304 307.5H1858 M304 357.5H1858 M304 406.5H1858 M304 455.5H1858" stroke="#778899" stroke-width="1" stroke-dasharray="3 3" stroke-dashoffset="5" fill="none"/>
<path d="M304 249.5H1858" stroke="#00d000" stroke-width="1" stroke-dasharray="9 6 3 6" fill="none"/>
<path d="M304 375.5H1858" stroke="#00d000" stroke-width="1" stroke-dasharray="9 6 3 6" fill="none"/>
<polyline points="304.5,355.7 308.5,358.9 312.5,361.0 316.5,362.8 320.5,365.7 324.5,366.9 328.5,367.2 332.5,366.9 336.5,367.3 340.5,367.5 344.5,366.8 348.5,366.8 352.5,366.6 356.5,366.5 360.5,366.3 364.5,365.4 368.5,364.5 372.5,362.4 376.5,361.5 380.5,360.5 384.5,362.1 388.5,362.7 392.5,362.7 396.5,362.6 400.5,362.6 404.5,362.7 408.5,362.8 412.5,362.9 416.5,362.5 420.5,360.0 424.5,352.7 428.5,348.3 432.5,346.2 436.5,344.9 440.5,343.7 444.5,342.7 448.5,342.7 452.5,342.8 456.5,342.8 460.5,342.9 464.5,342.9 468.5,343.5 472.5,344.0 476.5,344.1 480.5,343.9 484.5,344.4 488.5,341.4 492.5,340.8 496.5,340.1 500.5,338.7 504.5,339.0 508.5,335.2 512.5,330.3 516.5,328.2 520.5,325.7 524.5,323.3 528.5,320.7 532.5,318.1 536.5,317.4 540.5,317.4 544.5,316.6 548.5,314.2 552.5,313.6 556.5,313.3 560.5,313.5 564.5,314.3 568.5,312.6 572.5,309.5 576.5,305.9 580.5,303.3 584.5,302.7 588.5,300.7 592.5,296.8 596.5,284.0 600.5,273.4 604.5,264.5 608.5,253.3 612.5,246.1 616.5,240.5 620.5,235.5 624.5,229.1 628.5,222.5 632.5,218.7 636.5,213.2 640.5,205.6 644.5,198.5 648.5,192.4 652.5,188.5 656.5,187.1 660.5,188.2 664.5,193.4 668.5,199.3 672.5,203.5 676.5,202.8 680.5,201.3 684.5,200.6 688.5,200.7 692.5,198.5 696.5,195.1 700.5,190.0 704.5,187.3 708.5,188.5 712.5,190.0 716.5,193.5 720.5,199.7 724.5,208.6 728.5,220.6 732.5,231.4 736.5,239.1 740.5,245.0 744.5,246.2 748.5,240.5 752.5,232.6 756.5,226.1 760.5,218.4 764.5,211.1 768.5,207.7 772.5,202.9 776.5,197.7 780.5,192.2 784.5,192.8 788.5,192.7 792.5,192.5 796.5,194.9 800.5,198.6 804.5,202.0 808.5,203.6 812.5,200.9 816.5,195.9 820.5,192.6 824.5,188.8 828.5,185.9 832.5,182.8 836.5,178.3 840.5,174.9 844.5,171.9 848.5,169.9 852.5,169.3 856.5,168.9 860.5,168.3 864.5,164.8 868.5,161.5 872.5,160.1 876.5,159.7 880.5,163.6 884.5,169.2 888.5,172.3 892.5,171.1 896.5,169.4 900.5,168.7 904.5,168.8 908.5,168.6 912.5,168.2 916.5,169.3 920.5,170.2 924.5,170.5 928.5,168.0 932.5,164.6 936.5,161.2 940.5,159.2 944.5,159.8 948.5,160.1 952.5,159.5 956.5,160.8 960.5,161.0 964.5,161.0 968.5,161.0 972.5,161.2 976.5,161.6 980.5,162.1 984.5,162.4 988.5,162.7 992.5,163.9 996.5,163.8 1000.5,164.4 1004.5,162.4 1008.5,160.3 1012.5,159.3 1016.5,159.6 1020.5,159.2 1024.5,159.3 1028.5,160.0 1032.5,160.6 1036.5,161.0 1040.5,160.8 1044.5,161.1 1048.5,162.5 1052.5,162.9 1056.5,162.8 1060.5,161.7 1064.5,158.6 1068.5,156.4 1072.5,155.0 1076.5,153.4 1080.5,151.8 1084.5,151.8 1088.5,153.3 1092.5,155.6 1096.5,157.2 1100.5,160.4 1104.5,162.6 1108.5,164.5 1112.5,166.7 1116.5,168.8 1120.5,172.3 1124.5,178.4 1128.5,184.2 1132.5,192.4 1136.5,197.1 1140.5,198.9 1144.5,199.3 1148.5,200.0 1152.5,200.9 1156.5,199.2 1160.5,199.4 1164.5,199.5 1168.5,199.2 1172.5,198.4 1176.5,197.0 1180.5,196.5 1184.5,197.8 1188.5,202.0 1192.5,206.7 1196.5,212.6 1200.5,215.8 1204.5,220.3 1208.5,226.4 1212.5,230.6 1216.5,233.5 1220.5,235.8 1224.5,239.2 1228.5,242.1 1232.5,243.8 1236.5,244.4 1240.5,247.5 1244.5,252.7 1248.5,256.1 1252.5,258.2 1256.5,258.7 1260.5,258.9 1264.5,258.1 1268.5,257.7 1272.5,257.0 1276.5,256.5 1280.5,256.5 1284.5,256.1 1288.5,256.1 1292.5,256.1 1296.5,257.0 1300.5,255.6 1304.5,255.6 1308.5,255.9 1312.5,257.4 1316.5,257.7 1320.5,257.9 1324.5,258.1 1328.5,258.5 1332.5,258.5 1336.5,257.3 1340.5,256.7 1344.5,258.0 1348.5,259.2 1352.5,260.9 1356.5,263.0 1360.5,264.0 1364.5,258.9 1368.5,254.2 1372.5,250.3 1376.5,246.5 1380.5,242.6 1384.5,241.1 1388.5,242.8 1392.5,245.4 1396.5,246.4 1400.5,249.2 1404.5,254.2 1408.5,258.2 1412.5,262.7 1416.5,267.2 1420.5,272.2 1424.5,279.6 1428.5,289.0 1432.5,299.7 1436.5,312.6 1440.5,326.7 1444.5,334.0 1448.5,336.5 1452.5,339.6 1456.5,342.9 1460.5,345.5 1464.5,348.6 1468.5,351.2 1472.5,352.9 1476.5,353.3 1480.5,353.5 1484.5,353.9 1488.5,353.8 1492.5,352.8 1496.5,350.3 1500.5,347.4 1504.5,344.0 1508.5,344.0 1512.5,347.8 1516.5,352.2 1520.5,355.4 1524.5,357.5 1528.5,357.7 1532.5,357.7 1536.5,359.4 1540.5,361.0" fill="none" stroke="#3cb371" stroke-width="1" shape-rendering="crispEdges"/>
<polyline points="304.5,381.2 308.5,382.7 312.5,383.4 316.5,384.1 320.5,384.9 324.5,385.2 328.5,385.3 332.5,385.2 336.5,385.4 340.5,385.4 344.5,385.2 348.5,385.2 352.5,384.9 356.5,384.9 360.5,384.7 364.5,384.1 368.5,382.2 372.5,380.4 376.5,378.5 380.5,377.4 384.5,376.4 388.5,376.1 392.5,376.1 396.5,375.9 400.5,375.9 404.5,376.2 408.5,376.2 412.5,376.4 416.5,376.0 420.5,375.1 424.5,373.6 428.5,371.9 432.5,370.4 436.5,368.9 440.5,367.6 444.5,366.6 448.5,366.6 452.5,366.7 456.5,366.7 460.5,367.1 464.5,366.8 468.5,366.1 472.5,365.6 476.5,365.5 480.5,365.6 484.5,365.2 488.5,363.6 492.5,362.5 496.5,361.6 500.5,361.1 504.5,361.1 508.5,360.3 512.5,359.0 516.5,358.2 520.5,357.2 524.5,356.1 528.5,354.5 532.5,352.9 536.5,352.1 540.5,350.5 544.5,348.9 548.5,346.5 552.5,344.5 556.5,342.1 560.5,338.8 564.5,335.9 568.5,334.8 572.5,332.6 576.5,329.9 580.5,327.9 584.5,326.6 588.5,325.6 592.5,324.1 596.5,320.5 600.5,316.9 604.5,313.1 608.5,308.8 612.5,305.0 616.5,300.4 620.5,295.6 624.5,290.8 628.5,286.4 632.5,282.0 636.5,277.1 640.5,272.3 644.5,267.0 648.5,261.2 652.5,256.5 656.5,252.7 660.5,249.2 664.5,245.6 668.5,243.2 672.5,241.9 676.5,242.3 680.5,243.2 684.5,243.7 688.5,244.4 692.5,246.1 696.5,248.5 700.5,252.1 704.5,256.1 708.5,259.4 712.5,261.9 716.5,265.4 720.5,269.6 724.5,273.6 728.5,277.4 732.5,280.5 736.5,282.4 740.5,283.8 744.5,284.1 748.5,282.8 752.5,280.6 756.5,278.5 760.5,275.8 764.5,273.2 768.5,271.9 772.5,269.0 776.5,265.0 780.5,259.2 784.5,254.5 788.5,251.2 792.5,248.1 796.5,245.2 800.5,242.4 804.5,239.8 808.5,236.8 812.5,232.8 816.5,229.2 820.5,225.6 824.5,222.6 828.5,220.6 832.5,218.8 836.5,216.6 840.5,214.8 844.5,213.2 848.5,210.9 852.5,209.4 856.5,208.7 860.5,208.3 864.5,205.8 868.5,202.8 872.5,200.2 876.5,196.6 880.5,193.8 884.5,191.8 888.5,190.8 892.5,191.4 896.5,192.8 900.5,193.8 904.5,194.7 908.5,195.2 912.5,196.2 916.5,197.4 920.5,198.2 924.5,198.3 928.5,197.6 932.5,196.1 936.5,194.2 940.5,193.2 944.5,193.3 948.5,193.4 952.5,193.2 956.5,193.7 960.5,193.8 964.5,194.1 968.5,194.2 972.5,193.4 976.5,191.9 980.5,190.7 984.5,189.9 988.5,188.7 992.5,187.1 996.5,185.3 1000.5,184.0 1004.5,182.8 1008.5,182.2 1012.5,181.9 1016.5,182.0 1020.5,181.8 1024.5,181.9 1028.5,182.4 1032.5,182.9 1036.5,183.2 1040.5,182.8 1044.5,181.3 1048.5,180.1 1052.5,179.0 1056.5,179.1 1060.5,179.6 1064.5,180.4 1068.5,181.7 1072.5,183.1 1076.5,185.3 1080.5,187.6 1084.5,190.6 1088.5,194.1 1092.5,197.4 1096.5,200.7 1100.5,203.3 1104.5,204.9 1108.5,205.8 1112.5,206.9 1116.5,207.9 1120.5,209.8 1124.5,212.1 1128.5,214.1 1132.5,216.7 1136.5,218.9 1140.5,221.1 1144.5,222.6 1148.5,224.3 1152.5,226.2 1156.5,228.2 1160.5,229.4 1164.5,230.1 1168.5,230.9 1172.5,232.2 1176.5,233.6 1180.5,235.6 1184.5,238.2 1188.5,241.6 1192.5,244.9 1196.5,248.2 1200.5,251.2 1204.5,254.2 1208.5,257.0 1212.5,259.7 1216.5,262.4 1220.5,264.2 1224.5,265.6 1228.5,266.6 1232.5,267.1 1236.5,267.5 1240.5,268.6 1244.5,269.9 1248.5,270.8 1252.5,271.4 1256.5,271.6 1260.5,271.8 1264.5,271.4 1268.5,271.2 1272.5,270.9 1276.5,270.4 1280.5,269.9 1284.5,270.2 1288.5,270.1 1292.5,270.1 1296.5,269.9 1300.5,270.3 1304.5,270.9 1308.5,271.0 1312.5,271.4 1316.5,271.8 1320.5,271.9 1324.5,272.1 1328.5,272.5 1332.5,273.1 1336.5,274.4 1340.5,275.8 1344.5,277.1 1348.5,278.3 1352.5,279.4 1356.5,280.6 1360.5,281.9 1364.5,283.9 1368.5,286.9 1372.5,289.8 1376.5,293.1 1380.5,296.4 1384.5,300.2 1388.5,304.7 1392.5,309.6 1396.5,314.4 1400.5,319.6 1404.5,325.1 1408.5,330.8 1412.5,336.1 1416.5,340.5 1420.5,345.1 1424.5,349.6 1428.5,353.4 1432.5,356.8 1436.5,360.2 1440.5,363.7 1444.5,366.9 1448.5,370.7 1452.5,374.2 1456.5,376.8 1460.5,378.8 1464.5,380.4 1468.5,381.2 1472.5,381.9 1476.5,382.1 1480.5,382.2 1484.5,382.7 1488.5,382.9 1492.5,383.9 1496.5,385.9 1500.5,388.1 1504.5,391.4 1508.5,395.2 1512.5,399.9 1516.5,404.4 1520.5,408.9 1524.5,411.6 1528.5,413.0 1532.5,414.9 1536.5,417.1 1540.5,419.9" fill="none" stroke="#3cb371" stroke-width="1" shape-rendering="crispEdges"/>
<polyline points="304.5,406.7 308.5,406.5 312.5,405.9 316.5,405.4 320.5,404.1 324.5,403.5 328.5,403.4 332.5,403.5 336.5,403.4 340.5,403.3 344.5,403.6 348.5,403.6 352.5,403.3 356.5,403.3 360.5,403.1 364.5,402.8 368.5,400.0 372.5,398.3 376.5,395.5 380.5,394.2 384.5,390.6 388.5,389.4 392.5,389.6 396.5,389.2 400.5,389.2 404.5,389.7 408.5,389.7 412.5,389.8 416.5,389.5 420.5,390.2 424.5,394.5 428.5,395.5 432.5,394.7 436.5,392.9 440.5,391.5 444.5,390.6 448.5,390.6 452.5,390.6 456.5,390.6 460.5,391.4 464.5,390.7 468.5,388.8 472.5,387.2 476.5,386.9 480.5,387.3 484.5,386.0 488.5,385.9 492.5,384.2 496.5,383.2 500.5,383.4 504.5,383.2 508.5,385.4 512.5,387.7 516.5,388.2 520.5,388.7 524.5,389.0 528.5,388.3 532.5,387.8 536.5,386.8 540.5,383.6 544.5,381.1 548.5,378.8 552.5,375.4 556.5,370.9 560.5,364.0 564.5,357.6 568.5,357.0 572.5,355.6 576.5,354.0 580.5,352.5 584.5,350.6 588.5,350.5 592.5,351.5 596.5,357.0 600.5,360.3 604.5,361.8 608.5,364.3 612.5,363.9 616.5,360.2 620.5,355.8 624.5,352.5 628.5,350.4 632.5,345.3 636.5,341.1 640.5,339.0 644.5,335.5 648.5,330.0 652.5,324.5 656.5,318.3 660.5,310.1 664.5,297.8 668.5,287.2 672.5,280.4 676.5,281.9 680.5,285.0 684.5,286.8 688.5,288.2 692.5,293.6 696.5,301.9 700.5,314.1 704.5,325.0 708.5,330.2 712.5,333.9 716.5,337.4 720.5,339.4 724.5,338.5 728.5,334.2 732.5,329.6 736.5,325.7 740.5,322.6 744.5,321.9 748.5,325.0 752.5,328.6 756.5,330.9 760.5,333.2 764.5,335.3 768.5,336.0 772.5,335.1 776.5,332.3 780.5,326.2 784.5,316.2 788.5,309.6 792.5,303.6 796.5,295.6 800.5,286.3 804.5,277.6 808.5,270.0 812.5,264.8 816.5,262.4 820.5,258.5 824.5,256.3 828.5,255.3 832.5,254.9 836.5,254.8 840.5,254.6 844.5,254.4 848.5,252.0 852.5,249.6 856.5,248.5 860.5,248.4 864.5,246.9 868.5,244.1 872.5,240.3 876.5,233.5 880.5,224.1 884.5,214.5 888.5,209.2 892.5,211.7 896.5,216.1 900.5,219.0 904.5,220.5 908.5,221.9 912.5,224.3 916.5,225.5 920.5,226.2 924.5,226.2 928.5,227.1 932.5,227.6 936.5,227.3 940.5,227.1 944.5,226.9 948.5,226.8 952.5,227.0 956.5,226.5 960.5,226.5 964.5,227.1 968.5,227.4 972.5,225.7 976.5,222.2 980.5,219.3 984.5,217.5 988.5,214.7 992.5,210.2 996.5,206.8 1000.5,203.6 1004.5,203.2 1008.5,204.1 1012.5,204.5 1016.5,204.4 1020.5,204.5 1024.5,204.6 1028.5,204.9 1032.5,205.2 1036.5,205.5 1040.5,204.9 1044.5,201.5 1048.5,197.6 1052.5,195.1 1056.5,195.4 1060.5,197.4 1064.5,202.3 1068.5,207.0 1072.5,211.1 1076.5,217.3 1080.5,223.3 1084.5,229.4 1088.5,234.9 1092.5,239.2 1096.5,244.1 1100.5,246.3 1104.5,247.2 1108.5,247.2 1112.5,247.1 1116.5,247.0 1120.5,247.2 1124.5,245.7 1128.5,243.9 1132.5,240.9 1136.5,240.7 1140.5,243.3 1144.5,245.9 1148.5,248.6 1152.5,251.6 1156.5,257.3 1160.5,259.5 1164.5,260.7 1168.5,262.7 1172.5,266.0 1176.5,270.2 1180.5,274.6 1184.5,278.7 1188.5,281.1 1192.5,283.1 1196.5,283.9 1200.5,286.7 1204.5,288.0 1208.5,287.6 1212.5,288.8 1216.5,291.2 1220.5,292.6 1224.5,292.0 1228.5,291.1 1232.5,290.4 1236.5,290.6 1240.5,289.8 1244.5,287.1 1248.5,285.5 1252.5,284.7 1256.5,284.6 1260.5,284.6 1264.5,284.8 1268.5,284.8 1272.5,284.7 1276.5,284.4 1280.5,283.4 1284.5,284.3 1288.5,284.2 1292.5,284.2 1296.5,282.7 1300.5,285.0 1304.5,286.1 1308.5,286.1 1312.5,285.4 1316.5,285.9 1320.5,286.0 1324.5,286.0 1328.5,286.5 1332.5,287.8 1336.5,291.5 1340.5,294.8 1344.5,296.3 1348.5,297.4 1352.5,298.0 1356.5,298.2 1360.5,299.8 1364.5,308.9 1368.5,319.6 1372.5,329.2 1376.5,339.7 1380.5,350.2 1384.5,359.3 1388.5,366.6 1392.5,373.7 1396.5,382.5 1400.5,390.1 1404.5,396.1 1408.5,403.3 1412.5,409.5 1416.5,413.8 1420.5,418.0 1424.5,419.5 1428.5,417.9 1432.5,413.8 1436.5,407.8 1440.5,400.7 1444.5,399.9 1448.5,404.9 1452.5,408.9 1456.5,410.6 1460.5,412.1 1464.5,412.1 1468.5,411.3 1472.5,410.9 1476.5,411.0 1480.5,411.0 1484.5,411.5 1488.5,412.0 1492.5,414.9 1496.5,421.6 1500.5,428.9 1504.5,438.8 1508.5,446.5 1512.5,451.9 1516.5,456.6 1520.5,462.5 1524.5,465.6 1528.5,468.3 1532.5,472.1 1536.5,474.7 1540.5,478.8" fill="none" stroke="#3cb371" stroke-width="1" shape-rendering="crispEdges"/>
<rect x="304" y="412" width="1554" height="1" fill="#ff0000"/>
<rect x="304" y="417" width="1554" height="2" fill="#dc143c"/>
<rect x="304" y="452" width="1554" height="1" fill="#778899"/>
<path d="M304.5 396V401 M308.5 376V398 M312.5 374V393 M316.5 376V388 M320.5 377V394 M324.5 372V382 M328.5 374V377 M332.5 360V376 M336.5 374V380 M340.5 372V381 M344.5 366V379 M348.5 355V382 M352.5 370V386 M356.5 383V390 M360.5 382V387 M364.5 376V383 M368.5 363V390 M372.5 361V370 M376.5 362V365 M380.5 363V369 M384.5 355V382 M388.5 377V388 M392.5 380V385 M396.5 372V385 M400.5 373V386 M404.5 376V383 M408.5 375V383 M412.5 371V382 M416.5 370V379 M420.5 354V377 M424.5 328V362 M428.5 342V352 M432.5 341V358 M436.5 353V359 M440.5 354V357 M444.5 356V359 M448.5 356V369 M452.5 360V376 M456.5 353V364 M460.5 362V379 M464.5 369V380 M468.5 370V375 M472.5 371V373 M476.5 371V377 M480.5 372V382 M484.5 369V382 M488.5 341V380 M492.5 340V359 M496.5 351V358 M500.5 344V358 M504.5 339V352 M508.5 331V350 M512.5 325V336 M516.5 324V346 M520.5 333V346 M524.5 330V343 M528.5 328V341 M532.5 328V339 M536.5 328V352 M540.5 335V351 M544.5 335V362 M548.5 320V338 M552.5 320V332 M556.5 326V334 M560.5 310V330 M564.5 314V322 M568.5 313V326 M572.5 303V322 M576.5 303V314 M580.5 303V312 M584.5 305V321 M588.5 310V321 M592.5 298V317 M596.5 255V304 M600.5 255V268 M604.5 258V265 M608.5 247V263 M612.5 245V258 M616.5 253V268 M620.5 249V258 M624.5 238V253 M628.5 237V244 M632.5 237V245 M636.5 215V243 M640.5 215V241 M644.5 211V218 M648.5 205V216 M652.5 204V216 M656.5 211V231 M660.5 227V241 M664.5 234V250 M668.5 247V264 M672.5 259V286 M676.5 273V277 M680.5 273V280 M684.5 273V281 M688.5 256V276 M692.5 262V293 M696.5 276V304 M700.5 300V324 M704.5 318V332 M708.5 295V328 M712.5 294V308 M716.5 290V300 M720.5 298V302 M724.5 291V306 M728.5 280V292 M732.5 273V285 M736.5 262V281 M740.5 264V266 M744.5 250V273 M748.5 236V255 M752.5 221V238 M756.5 229V234 M760.5 221V237 M764.5 220V235 M768.5 218V240 M772.5 231V240 M776.5 222V235 M780.5 203V226 M784.5 204V235 M788.5 228V238 M792.5 232V235 M796.5 232V245 M800.5 242V250 M804.5 238V248 M808.5 220V241 M812.5 198V225 M816.5 185V199 M820.5 188V194 M824.5 189V196 M828.5 186V205 M832.5 194V199 M836.5 182V198 M840.5 185V196 M844.5 189V190 M848.5 174V198 M852.5 189V207 M856.5 195V211 M860.5 196V208 M864.5 178V199 M868.5 169V179 M872.5 169V196 M876.5 165V181 M880.5 167V189 M884.5 187V199 M888.5 195V205 M892.5 194V212 M896.5 210V222 M900.5 214V229 M904.5 205V215 M908.5 199V213 M912.5 206V229 M916.5 209V219 M920.5 203V214 M924.5 192V206 M928.5 171V197 M932.5 171V176 M936.5 169V173 M940.5 166V178 M944.5 175V187 M948.5 175V189 M952.5 169V180 M956.5 166V180 M960.5 179V191 M964.5 189V211 M968.5 203V208 M972.5 196V204 M976.5 183V197 M980.5 187V197 M984.5 187V194 M988.5 181V194 M992.5 180V190 M996.5 170V183 M1000.5 174V188 M1004.5 165V184 M1008.5 162V173 M1012.5 157V168 M1016.5 164V178 M1020.5 162V174 M1024.5 173V188 M1028.5 184V197 M1032.5 184V192 M1036.5 185V187 M1040.5 182V188 M1044.5 171V183 M1048.5 169V181 M1052.5 163V179 M1056.5 170V192 M1060.5 189V201 M1064.5 199V215 M1068.5 209V213 M1072.5 206V219 M1076.5 205V222 M1080.5 219V229 M1084.5 212V230 M1088.5 227V240 M1092.5 231V236 M1096.5 232V240 M1100.5 221V242 M1104.5 211V234 M1108.5 204V217 M1112.5 202V208 M1116.5 203V207 M1120.5 204V226 M1124.5 217V220 M1128.5 216V223 M1132.5 218V230 M1136.5 227V236 M1140.5 234V244 M1144.5 237V246 M1148.5 241V247 M1152.5 240V249 M1156.5 242V267 M1160.5 247V267 M1164.5 241V249 M1168.5 241V252 M1172.5 250V260 M1176.5 257V266 M1180.5 262V267 M1184.5 264V271 M1188.5 266V281 M1192.5 270V278 M1196.5 273V274 M1200.5 256V280 M1204.5 277V281 M1208.5 275V278 M1212.5 269V285 M1216.5 281V289 M1220.5 280V290 M1224.5 263V287 M1228.5 264V270 M1232.5 254V268 M1236.5 258V270 M1240.5 268V271 M1244.5 267V281 M1248.5 261V270 M1252.5 267V271 M1256.5 269V271 M1260.5 255V273 M1264.5 253V275 M1268.5 263V271 M1272.5 261V267 M1276.5 264V268 M1280.5 261V281 M1284.5 268V296 M1288.5 274V289 M1292.5 268V283 M1296.5 279V286 M1300.5 281V292 M1304.5 278V290 M1308.5 265V284 M1312.5 264V274 M1316.5 266V277 M1320.5 269V283 M1324.5 269V277 M1328.5 268V282 M1332.5 277V285 M1336.5 280V295 M1340.5 294V309 M1344.5 285V302 M1348.5 289V298 M1352.5 286V295 M1356.5 284V291 M1360.5 284V299 M1364.5 295V327 M1368.5 322V338 M1372.5 328V339 M1376.5 338V352 M1380.5 346V359 M1384.5 354V357 M1388.5 352V364 M1392.5 357V367 M1396.5 359V375 M1400.5 373V378 M1404.5 375V383 M1408.5 373V391 M1412.5 388V394 M1416.5 380V395 M1420.5 379V390 M1424.5 380V391 M1428.5 365V392 M1432.5 348V374 M1436.5 354V364 M1440.5 357V366 M1444.5 363V389 M1448.5 385V413 M1452.5 409V410 M1456.5 398V414 M1460.5 392V402 M1464.5 371V400 M1468.5 369V388 M1472.5 370V380 M1476.5 374V381 M1480.5 373V387 M1484.5 370V392 M1488.5 385V395 M1492.5 391V410 M1496.5 407V425 M1500.5 421V435 M1504.5 430V446 M1508.5 442V446 M1512.5 443V451 M1516.5 444V449 M1520.5 447V457 M1524.5 439V461 M1528.5 432V442 M1532.5 435V452 M1536.5 441V449 M1540.5 437V470" stroke="#00ff00" stroke-width="1" fill="none"/>
<g fill="#00ff00"><rect x="303" y="397" width="3" height="3"/><rect x="307" y="390" width="3" height="8"/><rect x="311" y="380" width="3" height="11"/><rect x="315" y="380" width="3" height="2"/><rect x="319" y="379" width="3" height="3"/><rect x="323" y="375" width="3" height="5"/><rect x="327" y="374" width="3" height="2"/><rect x="331" y="374" width="3" height="2"/><rect x="335" y="375" width="3" height="5"/><rect x="339" y="378" width="3" height="2"/><rect x="343" y="372" width="3" height="7"/><rect x="347" y="372" width="3" height="10"/><rect x="351" y="381" width="3" height="3"/><rect x="355" y="383" width="3" height="4"/><rect x="359" y="382" width="3" height="5"/><rect x="363" y="376" width="3" height="7"/><rect x="367" y="367" width="3" height="10"/><rect x="371" y="362" width="3" height="6"/><rect x="375" y="362" width="3" height="2"/><rect x="379" y="363" width="3" height="5"/><rect x="383" y="367" width="3" height="11"/><rect x="387" y="377" width="3" height="8"/><rect x="391" y="382" width="3" height="3"/><rect x="395" y="376" width="3" height="7"/><rect x="399" y="376" width="3" height="4"/><rect x="403" y="379" width="3" height="3"/><rect x="407" y="375" width="3" height="7"/><rect x="411" y="375" width="3" height="3"/><rect x="415" y="372" width="3" height="6"/><rect x="419" y="360" width="3" height="13"/><rect x="423" y="342" width="3" height="19"/><rect x="427" y="342" width="3" height="6"/><rect x="431" y="347" width="3" height="8"/><rect x="435" y="354" width="3" height="2"/><rect x="439" y="355" width="3" height="2"/><rect x="443" y="356" width="3" height="2"/><rect x="447" y="357" width="3" height="11"/><rect x="451" y="363" width="3" height="5"/><rect x="455" y="363" width="3" height="1"/><rect x="459" y="363" width="3" height="14"/><rect x="463" y="370" width="3" height="7"/><rect x="467" y="370" width="3" height="2"/><rect x="471" y="371" width="3" height="1"/><rect x="475" y="371" width="3" height="4"/><rect x="479" y="374" width="3" height="8"/><rect x="483" y="373" width="3" height="9"/><rect x="487" y="344" width="3" height="30"/><rect x="491" y="344" width="3" height="11"/><rect x="495" y="354" width="3" height="2"/><rect x="499" y="348" width="3" height="8"/><rect x="503" y="343" width="3" height="6"/><rect x="507" y="331" width="3" height="13"/><rect x="511" y="328" width="3" height="4"/><rect x="515" y="328" width="3" height="12"/><rect x="519" y="336" width="3" height="4"/><rect x="523" y="336" width="3" height="1"/><rect x="527" y="334" width="3" height="3"/><rect x="531" y="332" width="3" height="3"/><rect x="535" y="332" width="3" height="15"/><rect x="539" y="344" width="3" height="3"/><rect x="543" y="337" width="3" height="8"/><rect x="547" y="324" width="3" height="14"/><rect x="551" y="324" width="3" height="8"/><rect x="555" y="326" width="3" height="6"/><rect x="559" y="314" width="3" height="13"/><rect x="563" y="314" width="3" height="4"/><rect x="567" y="317" width="3" height="5"/><rect x="571" y="309" width="3" height="13"/><rect x="575" y="303" width="3" height="7"/><rect x="579" y="303" width="3" height="5"/><rect x="583" y="307" width="3" height="12"/><rect x="587" y="310" width="3" height="9"/><rect x="591" y="299" width="3" height="12"/><rect x="595" y="266" width="3" height="34"/><rect x="599" y="263" width="3" height="4"/><rect x="603" y="262" width="3" height="2"/><rect x="607" y="247" width="3" height="16"/><rect x="611" y="247" width="3" height="10"/><rect x="615" y="253" width="3" height="4"/><rect x="619" y="250" width="3" height="4"/><rect x="623" y="240" width="3" height="11"/><rect x="627" y="237" width="3" height="4"/><rect x="631" y="237" width="3" height="6"/><rect x="635" y="229" width="3" height="14"/><rect x="639" y="217" width="3" height="13"/><rect x="643" y="211" width="3" height="7"/><rect x="647" y="205" width="3" height="7"/><rect x="651" y="205" width="3" height="11"/><rect x="655" y="215" width="3" height="13"/><rect x="659" y="227" width="3" height="10"/><rect x="663" y="236" width="3" height="12"/><rect x="667" y="247" width="3" height="17"/><rect x="671" y="263" width="3" height="11"/><rect x="675" y="273" width="3" height="2"/><rect x="679" y="274" width="3" height="6"/><rect x="683" y="273" width="3" height="7"/><rect x="687" y="262" width="3" height="12"/><rect x="691" y="262" width="3" height="27"/><rect x="695" y="288" width="3" height="15"/><rect x="699" y="302" width="3" height="20"/><rect x="703" y="321" width="3" height="2"/><rect x="707" y="301" width="3" height="22"/><rect x="711" y="294" width="3" height="8"/><rect x="715" y="294" width="3" height="6"/><rect x="719" y="299" width="3" height="1"/><rect x="723" y="291" width="3" height="9"/><rect x="727" y="282" width="3" height="10"/><rect x="731" y="277" width="3" height="6"/><rect x="735" y="265" width="3" height="13"/><rect x="739" y="264" width="3" height="2"/><rect x="743" y="252" width="3" height="13"/><rect x="747" y="237" width="3" height="16"/><rect x="751" y="230" width="3" height="8"/><rect x="755" y="230" width="3" height="3"/><rect x="759" y="225" width="3" height="8"/><rect x="763" y="221" width="3" height="5"/><rect x="767" y="221" width="3" height="15"/><rect x="771" y="231" width="3" height="5"/><rect x="775" y="222" width="3" height="10"/><rect x="779" y="205" width="3" height="18"/><rect x="783" y="205" width="3" height="24"/><rect x="787" y="228" width="3" height="7"/><rect x="791" y="232" width="3" height="3"/><rect x="795" y="232" width="3" height="12"/><rect x="799" y="243" width="3" height="1"/><rect x="803" y="238" width="3" height="6"/><rect x="807" y="222" width="3" height="17"/><rect x="811" y="198" width="3" height="25"/><rect x="815" y="191" width="3" height="8"/><rect x="819" y="191" width="3" height="2"/><rect x="823" y="192" width="3" height="1"/><rect x="827" y="192" width="3" height="7"/><rect x="831" y="195" width="3" height="4"/><rect x="835" y="186" width="3" height="10"/><rect x="839" y="186" width="3" height="4"/><rect x="843" y="189" width="3" height="1"/><rect x="847" y="189" width="3" height="3"/><rect x="851" y="191" width="3" height="11"/><rect x="855" y="201" width="3" height="7"/><rect x="859" y="198" width="3" height="10"/><rect x="863" y="178" width="3" height="21"/><rect x="867" y="173" width="3" height="6"/><rect x="871" y="173" width="3" height="8"/><rect x="875" y="171" width="3" height="10"/><rect x="879" y="171" width="3" height="18"/><rect x="883" y="188" width="3" height="11"/><rect x="887" y="198" width="3" height="3"/><rect x="891" y="200" width="3" height="12"/><rect x="895" y="211" width="3" height="8"/><rect x="899" y="214" width="3" height="5"/><rect x="903" y="208" width="3" height="7"/><rect x="907" y="208" width="3" height="3"/><rect x="911" y="210" width="3" height="6"/><rect x="915" y="209" width="3" height="7"/><rect x="919" y="205" width="3" height="5"/><rect x="923" y="192" width="3" height="14"/><rect x="927" y="175" width="3" height="18"/><rect x="931" y="172" width="3" height="4"/><rect x="935" y="170" width="3" height="3"/><rect x="939" y="170" width="3" height="7"/><rect x="943" y="176" width="3" height="7"/><rect x="947" y="175" width="3" height="8"/><rect x="951" y="175" width="3" height="2"/><rect x="955" y="176" width="3" height="4"/><rect x="959" y="179" width="3" height="12"/><rect x="963" y="190" width="3" height="15"/><rect x="967" y="203" width="3" height="2"/><rect x="971" y="196" width="3" height="8"/><rect x="975" y="187" width="3" height="10"/><rect x="979" y="187" width="3" height="4"/><rect x="983" y="190" width="3" height="4"/><rect x="987" y="185" width="3" height="9"/><rect x="991" y="182" width="3" height="4"/><rect x="995" y="174" width="3" height="9"/><rect x="999" y="174" width="3" height="6"/><rect x="1003" y="168" width="3" height="12"/><rect x="1007" y="163" width="3" height="6"/><rect x="1011" y="163" width="3" height="4"/><rect x="1015" y="166" width="3" height="7"/><rect x="1019" y="172" width="3" height="2"/><rect x="1023" y="173" width="3" height="12"/><rect x="1027" y="184" width="3" height="2"/><rect x="1031" y="185" width="3" height="1"/><rect x="1035" y="185" width="3" height="2"/><rect x="1039" y="182" width="3" height="5"/><rect x="1043" y="173" width="3" height="10"/><rect x="1047" y="173" width="3" height="6"/><rect x="1051" y="175" width="3" height="4"/><rect x="1055" y="175" width="3" height="15"/><rect x="1059" y="189" width="3" height="11"/><rect x="1063" y="199" width="3" height="13"/><rect x="1067" y="210" width="3" height="2"/><rect x="1071" y="209" width="3" height="2"/><rect x="1075" y="209" width="3" height="12"/><rect x="1079" y="220" width="3" height="4"/><rect x="1083" y="223" width="3" height="7"/><rect x="1087" y="229" width="3" height="5"/><rect x="1091" y="232" width="3" height="2"/><rect x="1095" y="232" width="3" height="6"/><rect x="1099" y="227" width="3" height="11"/><rect x="1103" y="215" width="3" height="13"/><rect x="1107" y="204" width="3" height="12"/><rect x="1111" y="204" width="3" height="3"/><rect x="1115" y="206" width="3" height="1"/><rect x="1119" y="206" width="3" height="14"/><rect x="1123" y="219" width="3" height="1"/><rect x="1127" y="218" width="3" height="2"/><rect x="1131" y="218" width="3" height="10"/><rect x="1135" y="227" width="3" height="8"/><rect x="1139" y="234" width="3" height="10"/><rect x="1143" y="241" width="3" height="3"/><rect x="1147" y="241" width="3" height="4"/><rect x="1151" y="244" width="3" height="5"/><rect x="1155" y="248" width="3" height="13"/><rect x="1159" y="247" width="3" height="14"/><rect x="1163" y="242" width="3" height="6"/><rect x="1167" y="242" width="3" height="9"/><rect x="1171" y="250" width="3" height="8"/><rect x="1175" y="257" width="3" height="9"/><rect x="1179" y="265" width="3" height="2"/><rect x="1183" y="266" width="3" height="4"/><rect x="1187" y="269" width="3" height="2"/><rect x="1191" y="270" width="3" height="4"/><rect x="1195" y="273" width="3" height="1"/><rect x="1199" y="273" width="3" height="7"/><rect x="1203" y="277" width="3" height="3"/><rect x="1207" y="275" width="3" height="3"/><rect x="1211" y="275" width="3" height="7"/><rect x="1215" y="281" width="3" height="7"/><rect x="1219" y="280" width="3" height="8"/><rect x="1223" y="269" width="3" height="12"/><rect x="1227" y="264" width="3" height="6"/><rect x="1231" y="258" width="3" height="7"/><rect x="1235" y="258" width="3" height="11"/><rect x="1239" y="268" width="3" height="3"/><rect x="1243" y="267" width="3" height="4"/><rect x="1247" y="267" width="3" height="2"/><rect x="1251" y="268" width="3" height="3"/><rect x="1255" y="269" width="3" height="2"/><rect x="1259" y="268" width="3" height="2"/><rect x="1263" y="263" width="3" height="6"/><rect x="1267" y="263" width="3" height="4"/><rect x="1271" y="265" width="3" height="2"/><rect x="1275" y="265" width="3" height="1"/><rect x="1279" y="265" width="3" height="5"/><rect x="1283" y="269" width="3" height="14"/><rect x="1287" y="274" width="3" height="9"/><rect x="1291" y="274" width="3" height="8"/><rect x="1295" y="281" width="3" height="1"/><rect x="1299" y="281" width="3" height="9"/><rect x="1303" y="280" width="3" height="10"/><rect x="1307" y="267" width="3" height="14"/><rect x="1311" y="266" width="3" height="2"/><rect x="1315" y="266" width="3" height="11"/><rect x="1319" y="273" width="3" height="4"/><rect x="1323" y="269" width="3" height="5"/><rect x="1327" y="269" width="3" height="9"/><rect x="1331" y="277" width="3" height="7"/><rect x="1335" y="283" width="3" height="12"/><rect x="1339" y="294" width="3" height="2"/><rect x="1343" y="291" width="3" height="5"/><rect x="1347" y="289" width="3" height="3"/><rect x="1351" y="288" width="3" height="2"/><rect x="1355" y="288" width="3" height="1"/><rect x="1359" y="288" width="3" height="8"/><rect x="1363" y="295" width="3" height="28"/><rect x="1367" y="322" width="3" height="13"/><rect x="1371" y="334" width="3" height="5"/><rect x="1375" y="338" width="3" height="11"/><rect x="1379" y="348" width="3" height="8"/><rect x="1383" y="355" width="3" height="2"/><rect x="1387" y="356" width="3" height="2"/><rect x="1391" y="357" width="3" height="7"/><rect x="1395" y="363" width="3" height="12"/><rect x="1399" y="374" width="3" height="4"/><rect x="1403" y="377" width="3" height="3"/><rect x="1407" y="379" width="3" height="11"/><rect x="1411" y="389" width="3" height="2"/><rect x="1415" y="382" width="3" height="9"/><rect x="1419" y="382" width="3" height="6"/><rect x="1423" y="380" width="3" height="8"/><rect x="1427" y="367" width="3" height="14"/><rect x="1431" y="354" width="3" height="14"/><rect x="1435" y="354" width="3" height="4"/><rect x="1439" y="357" width="3" height="9"/><rect x="1443" y="365" width="3" height="23"/><rect x="1447" y="387" width="3" height="23"/><rect x="1451" y="409" width="3" height="1"/><rect x="1455" y="398" width="3" height="12"/><rect x="1459" y="396" width="3" height="3"/><rect x="1463" y="387" width="3" height="10"/><rect x="1467" y="375" width="3" height="13"/><rect x="1471" y="375" width="3" height="2"/><rect x="1475" y="376" width="3" height="4"/><rect x="1479" y="379" width="3" height="1"/><rect x="1483" y="379" width="3" height="10"/><rect x="1487" y="388" width="3" height="6"/><rect x="1491" y="393" width="3" height="17"/><rect x="1495" y="409" width="3" height="16"/><rect x="1499" y="424" width="3" height="8"/><rect x="1503" y="431" width="3" height="15"/><rect x="1507" y="444" width="3" height="2"/><rect x="1511" y="444" width="3" height="3"/><rect x="1515" y="446" width="3" height="3"/><rect x="1519" y="448" width="3" height="9"/><rect x="1523" y="439" width="3" height="18"/><rect x="1527" y="438" width="3" height="2"/><rect x="1531" y="438" width="3" height="10"/><rect x="1535" y="441" width="3" height="7"/><rect x="1539" y="441" width="3" height="13"/></g>
<rect x="304" y="398" width="1" height="1" fill="#000"/><rect x="308" y="391" width="1" height="6" fill="#000"/><rect x="312" y="381" width="1" height="9" fill="#000"/><rect x="320" y="380" width="1" height="1" fill="#000"/><rect x="324" y="376" width="1" height="3" fill="#000"/><rect x="336" y="376" width="1" height="3" fill="#fff"/><rect x="344" y="373" width="1" height="5" fill="#000"/><rect x="348" y="373" width="1" height="8" fill="#fff"/><rect x="352" y="382" width="1" height="1" fill="#fff"/><rect x="356" y="384" width="1" height="2" fill="#fff"/><rect x="360" y="383" width="1" height="3" fill="#000"/><rect x="364" y="377" width="1" height="5" fill="#000"/><rect x="368" y="368" width="1" height="8" fill="#000"/><rect x="372" y="363" width="1" height="4" fill="#000"/><rect x="380" y="364" width="1" height="3" fill="#fff"/><rect x="384" y="368" width="1" height="9" fill="#fff"/><rect x="388" y="378" width="1" height="6" fill="#fff"/><rect x="392" y="383" width="1" height="1" fill="#000"/><rect x="396" y="377" width="1" height="5" fill="#000"/><rect x="400" y="377" width="1" height="2" fill="#fff"/><rect x="404" y="380" width="1" height="1" fill="#fff"/><rect x="408" y="376" width="1" height="5" fill="#000"/><rect x="412" y="376" width="1" height="1" fill="#fff"/><rect x="416" y="373" width="1" height="4" fill="#000"/><rect x="420" y="361" width="1" height="11" fill="#000"/><rect x="424" y="343" width="1" height="17" fill="#000"/><rect x="428" y="343" width="1" height="4" fill="#fff"/><rect x="432" y="348" width="1" height="6" fill="#fff"/><rect x="448" y="358" width="1" height="9" fill="#fff"/><rect x="452" y="364" width="1" height="3" fill="#000"/><rect x="460" y="364" width="1" height="12" fill="#fff"/><rect x="464" y="371" width="1" height="5" fill="#000"/><rect x="476" y="372" width="1" height="2" fill="#fff"/><rect x="480" y="375" width="1" height="6" fill="#fff"/><rect x="484" y="374" width="1" height="7" fill="#000"/><rect x="488" y="345" width="1" height="28" fill="#000"/><rect x="492" y="345" width="1" height="9" fill="#fff"/><rect x="500" y="349" width="1" height="6" fill="#000"/><rect x="504" y="344" width="1" height="4" fill="#000"/><rect x="508" y="332" width="1" height="11" fill="#000"/><rect x="512" y="329" width="1" height="2" fill="#000"/><rect x="516" y="329" width="1" height="10" fill="#fff"/><rect x="520" y="337" width="1" height="2" fill="#000"/><rect x="528" y="335" width="1" height="1" fill="#000"/><rect x="532" y="333" width="1" height="1" fill="#000"/><rect x="536" y="333" width="1" height="13" fill="#fff"/><rect x="540" y="345" width="1" height="1" fill="#000"/><rect x="544" y="338" width="1" height="6" fill="#000"/><rect x="548" y="325" width="1" height="12" fill="#000"/><rect x="552" y="325" width="1" height="6" fill="#fff"/><rect x="556" y="327" width="1" height="4" fill="#000"/><rect x="560" y="315" width="1" height="11" fill="#000"/><rect x="564" y="315" width="1" height="2" fill="#fff"/><rect x="568" y="318" width="1" height="3" fill="#fff"/><rect x="572" y="310" width="1" height="11" fill="#000"/><rect x="576" y="304" width="1" height="5" fill="#000"/><rect x="580" y="304" width="1" height="3" fill="#fff"/><rect x="584" y="308" width="1" height="10" fill="#fff"/><rect x="588" y="311" width="1" height="7" fill="#000"/><rect x="592" y="300" width="1" height="10" fill="#000"/><rect x="596" y="267" width="1" height="32" fill="#000"/><rect x="600" y="264" width="1" height="2" fill="#000"/><rect x="608" y="248" width="1" height="14" fill="#000"/><rect x="612" y="248" width="1" height="8" fill="#fff"/><rect x="616" y="254" width="1" height="2" fill="#000"/><rect x="620" y="251" width="1" height="2" fill="#000"/><rect x="624" y="241" width="1" height="9" fill="#000"/><rect x="628" y="238" width="1" height="2" fill="#000"/><rect x="632" y="238" width="1" height="4" fill="#fff"/><rect x="636" y="230" width="1" height="12" fill="#000"/><rect x="640" y="218" width="1" height="11" fill="#000"/><rect x="644" y="212" width="1" height="5" fill="#000"/><rect x="648" y="206" width="1" height="5" fill="#000"/><rect x="652" y="206" width="1" height="9" fill="#fff"/><rect x="656" y="216" width="1" height="11" fill="#fff"/><rect x="660" y="228" width="1" height="8" fill="#fff"/><rect x="664" y="237" width="1" height="10" fill="#fff"/><rect x="668" y="248" width="1" height="15" fill="#fff"/><rect x="672" y="264" width="1" height="9" fill="#fff"/><rect x="680" y="275" width="1" height="4" fill="#fff"/><rect x="684" y="274" width="1" height="5" fill="#000"/><rect x="688" y="263" width="1" height="10" fill="#000"/><rect x="692" y="263" width="1" height="25" fill="#fff"/><rect x="696" y="289" width="1" height="13" fill="#fff"/><rect x="700" y="303" width="1" height="18" fill="#fff"/><rect x="708" y="302" width="1" height="20" fill="#000"/><rect x="712" y="295" width="1" height="6" fill="#000"/><rect x="716" y="295" width="1" height="4" fill="#fff"/><rect x="724" y="292" width="1" height="7" fill="#000"/><rect x="728" y="283" width="1" height="8" fill="#000"/><rect x="732" y="278" width="1" height="4" fill="#000"/><rect x="736" y="266" width="1" height="11" fill="#000"/><rect x="744" y="253" width="1" height="11" fill="#000"/><rect x="748" y="238" width="1" height="14" fill="#000"/><rect x="752" y="231" width="1" height="6" fill="#000"/><rect x="756" y="231" width="1" height="1" fill="#fff"/><rect x="760" y="226" width="1" height="6" fill="#000"/><rect x="764" y="222" width="1" height="3" fill="#000"/><rect x="768" y="222" width="1" height="13" fill="#fff"/><rect x="772" y="232" width="1" height="3" fill="#000"/><rect x="776" y="223" width="1" height="8" fill="#000"/><rect x="780" y="206" width="1" height="16" fill="#000"/><rect x="784" y="206" width="1" height="22" fill="#fff"/><rect x="788" y="229" width="1" height="5" fill="#fff"/><rect x="792" y="233" width="1" height="1" fill="#000"/><rect x="796" y="233" width="1" height="10" fill="#fff"/><rect x="804" y="239" width="1" height="4" fill="#000"/><rect x="808" y="223" width="1" height="15" fill="#000"/><rect x="812" y="199" width="1" height="23" fill="#000"/><rect x="816" y="192" width="1" height="6" fill="#000"/><rect x="828" y="193" width="1" height="5" fill="#fff"/><rect x="832" y="196" width="1" height="2" fill="#000"/><rect x="836" y="187" width="1" height="8" fill="#000"/><rect x="840" y="187" width="1" height="2" fill="#fff"/><rect x="848" y="190" width="1" height="1" fill="#fff"/><rect x="852" y="192" width="1" height="9" fill="#fff"/><rect x="856" y="202" width="1" height="5" fill="#fff"/><rect x="860" y="199" width="1" height="8" fill="#000"/><rect x="864" y="179" width="1" height="19" fill="#000"/><rect x="868" y="174" width="1" height="4" fill="#000"/><rect x="872" y="174" width="1" height="6" fill="#fff"/><rect x="876" y="172" width="1" height="8" fill="#000"/><rect x="880" y="172" width="1" height="16" fill="#fff"/><rect x="884" y="189" width="1" height="9" fill="#fff"/><rect x="888" y="199" width="1" height="1" fill="#fff"/><rect x="892" y="201" width="1" height="10" fill="#fff"/><rect x="896" y="212" width="1" height="6" fill="#fff"/><rect x="900" y="215" width="1" height="3" fill="#000"/><rect x="904" y="209" width="1" height="5" fill="#000"/><rect x="908" y="209" width="1" height="1" fill="#fff"/><rect x="912" y="211" width="1" height="4" fill="#fff"/><rect x="916" y="210" width="1" height="5" fill="#000"/><rect x="920" y="206" width="1" height="3" fill="#000"/><rect x="924" y="193" width="1" height="12" fill="#000"/><rect x="928" y="176" width="1" height="16" fill="#000"/><rect x="932" y="173" width="1" height="2" fill="#000"/><rect x="936" y="171" width="1" height="1" fill="#000"/><rect x="940" y="171" width="1" height="5" fill="#fff"/><rect x="944" y="177" width="1" height="5" fill="#fff"/><rect x="948" y="176" width="1" height="6" fill="#000"/><rect x="956" y="177" width="1" height="2" fill="#fff"/><rect x="960" y="180" width="1" height="10" fill="#fff"/><rect x="964" y="191" width="1" height="13" fill="#fff"/><rect x="972" y="197" width="1" height="6" fill="#000"/><rect x="976" y="188" width="1" height="8" fill="#000"/><rect x="980" y="188" width="1" height="2" fill="#fff"/><rect x="984" y="191" width="1" height="2" fill="#fff"/><rect x="988" y="186" width="1" height="7" fill="#000"/><rect x="992" y="183" width="1" height="2" fill="#000"/><rect x="996" y="175" width="1" height="7" fill="#000"/><rect x="1000" y="175" width="1" height="4" fill="#fff"/><rect x="1004" y="169" width="1" height="10" fill="#000"/><rect x="1008" y="164" width="1" height="4" fill="#000"/><rect x="1012" y="164" width="1" height="2" fill="#fff"/><rect x="1016" y="167" width="1" height="5" fill="#fff"/><rect x="1024" y="174" width="1" height="10" fill="#fff"/><rect x="1040" y="183" width="1" height="3" fill="#000"/><rect x="1044" y="174" width="1" height="8" fill="#000"/><rect x="1048" y="174" width="1" height="4" fill="#fff"/><rect x="1052" y="176" width="1" height="2" fill="#000"/><rect x="1056" y="176" width="1" height="13" fill="#fff"/><rect x="1060" y="190" width="1" height="9" fill="#fff"/><rect x="1064" y="200" width="1" height="11" fill="#fff"/><rect x="1076" y="210" width="1" height="10" fill="#fff"/><rect x="1080" y="221" width="1" height="2" fill="#fff"/><rect x="1084" y="224" width="1" height="5" fill="#fff"/><rect x="1088" y="230" width="1" height="3" fill="#fff"/><rect x="1096" y="233" width="1" height="4" fill="#fff"/><rect x="1100" y="228" width="1" height="9" fill="#000"/><rect x="1104" y="216" width="1" height="11" fill="#000"/><rect x="1108" y="205" width="1" height="10" fill="#000"/><rect x="1112" y="205" width="1" height="1" fill="#fff"/><rect x="1120" y="207" width="1" height="12" fill="#fff"/><rect x="1132" y="219" width="1" height="8" fill="#fff"/><rect x="1136" y="228" width="1" height="6" fill="#fff"/><rect x="1140" y="235" width="1" height="8" fill="#fff"/><rect x="1144" y="242" width="1" height="1" fill="#000"/><rect x="1148" y="242" width="1" height="2" fill="#fff"/><rect x="1152" y="245" width="1" height="3" fill="#fff"/><rect x="1156" y="249" width="1" height="11" fill="#fff"/><rect x="1160" y="248" width="1" height="12" fill="#000"/><rect x="1164" y="243" width="1" height="4" fill="#000"/><rect x="1168" y="243" width="1" height="7" fill="#fff"/><rect x="1172" y="251" width="1" height="6" fill="#fff"/><rect x="1176" y="258" width="1" height="7" fill="#fff"/><rect x="1184" y="267" width="1" height="2" fill="#fff"/><rect x="1192" y="271" width="1" height="2" fill="#fff"/><rect x="1200" y="274" width="1" height="5" fill="#fff"/><rect x="1204" y="278" width="1" height="1" fill="#000"/><rect x="1208" y="276" width="1" height="1" fill="#000"/><rect x="1212" y="276" width="1" height="5" fill="#fff"/><rect x="1216" y="282" width="1" height="5" fill="#fff"/><rect x="1220" y="281" width="1" height="6" fill="#000"/><rect x="1224" y="270" width="1" height="10" fill="#000"/><rect x="1228" y="265" width="1" height="4" fill="#000"/><rect x="1232" y="259" width="1" height="5" fill="#000"/><rect x="1236" y="259" width="1" height="9" fill="#fff"/><rect x="1240" y="269" width="1" height="1" fill="#fff"/><rect x="1244" y="268" width="1" height="2" fill="#000"/><rect x="1252" y="269" width="1" height="1" fill="#fff"/><rect x="1264" y="264" width="1" height="4" fill="#000"/><rect x="1268" y="264" width="1" height="2" fill="#fff"/><rect x="1280" y="266" width="1" height="3" fill="#fff"/><rect x="1284" y="270" width="1" height="12" fill="#fff"/><rect x="1288" y="275" width="1" height="7" fill="#000"/><rect x="1292" y="275" width="1" height="6" fill="#fff"/><rect x="1300" y="282" width="1" height="7" fill="#fff"/><rect x="1304" y="281" width="1" height="8" fill="#000"/><rect x="1308" y="268" width="1" height="12" fill="#000"/><rect x="1316" y="267" width="1" height="9" fill="#fff"/><rect x="1320" y="274" width="1" height="2" fill="#000"/><rect x="1324" y="270" width="1" height="3" fill="#000"/><rect x="1328" y="270" width="1" height="7" fill="#fff"/><rect x="1332" y="278" width="1" height="5" fill="#fff"/><rect x="1336" y="284" width="1" height="10" fill="#fff"/><rect x="1344" y="292" width="1" height="3" fill="#000"/><rect x="1348" y="290" width="1" height="1" fill="#000"/><rect x="1360" y="289" width="1" height="6" fill="#fff"/><rect x="1364" y="296" width="1" height="26" fill="#fff"/><rect x="1368" y="323" width="1" height="11" fill="#fff"/><rect x="1372" y="335" width="1" height="3" fill="#fff"/><rect x="1376" y="339" width="1" height="9" fill="#fff"/><rect x="1380" y="349" width="1" height="6" fill="#fff"/><rect x="1392" y="358" width="1" height="5" fill="#fff"/><rect x="1396" y="364" width="1" height="10" fill="#fff"/><rect x="1400" y="375" width="1" height="2" fill="#fff"/><rect x="1404" y="378" width="1" height="1" fill="#fff"/><rect x="1408" y="380" width="1" height="9" fill="#fff"/><rect x="1416" y="383" width="1" height="7" fill="#000"/><rect x="1420" y="383" width="1" height="4" fill="#fff"/><rect x="1424" y="381" width="1" height="6" fill="#000"/><rect x="1428" y="368" width="1" height="12" fill="#000"/><rect x="1432" y="355" width="1" height="12" fill="#000"/><rect x="1436" y="355" width="1" height="2" fill="#fff"/><rect x="1440" y="358" width="1" height="7" fill="#fff"/><rect x="1444" y="366" width="1" height="21" fill="#fff"/><rect x="1448" y="388" width="1" height="21" fill="#fff"/><rect x="1456" y="399" width="1" height="10" fill="#000"/><rect x="1460" y="397" width="1" height="1" fill="#000"/><rect x="1464" y="388" width="1" height="8" fill="#000"/><rect x="1468" y="376" width="1" height="11" fill="#000"/><rect x="1476" y="377" width="1" height="2" fill="#fff"/><rect x="1484" y="380" width="1" height="8" fill="#fff"/><rect x="1488" y="389" width="1" height="4" fill="#fff"/><rect x="1492" y="394" width="1" height="15" fill="#fff"/><rect x="1496" y="410" width="1" height="14" fill="#fff"/><rect x="1500" y="425" width="1" height="6" fill="#fff"/><rect x="1504" y="432" width="1" height="13" fill="#fff"/><rect x="1512" y="445" width="1" height="1" fill="#fff"/><rect x="1516" y="447" width="1" height="1" fill="#fff"/><rect x="1520" y="449" width="1" height="7" fill="#fff"/><rect x="1524" y="440" width="1" height="16" fill="#000"/><rect x="1532" y="439" width="1" height="8" fill="#fff"/><rect x="1536" y="442" width="1" height="5" fill="#000"/><rect x="1540" y="442" width="1" height="11" fill="#fff"/>
<rect x="303.5" y="126.5" width="1555" height="350" fill="none" stroke="#fff" stroke-width="1"/>
<path d="M1859 159.5H1863 M1859 209.5H1863 M1859 258.5H1863 M1859 307.5H1863 M1859 357.5H1863 M1859 406.5H1863 M1859 455.5H1863 M304.5 477V482 M400.5 477V482 M496.5 477V482 M592.5 477V482 M688.5 477V482 M784.5 477V482 M880.5 477V482 M976.5 477V482 M1072.5 477V482 M1168.5 477V482 M1264.5 477V482 M1360.5 477V482 M1456.5 477V482" stroke="#fff" stroke-width="1" fill="none"/>
</svg>
<svg style="left:307px;top:133px" width="9" height="6" viewBox="0 0 9 6" ><path d="M0 0H9L4.5 5Z" fill="#fff"/></svg><div class="a" style="left:322.30px;top:130.64px;font-size:12px;transform-origin:0 0;transform:scaleX(0.9109);color:#fff;">EURAUD,M1</div><div class="a" style="left:396.90px;top:130.39px;font-size:12.3px;color:#fff;letter-spacing:0.008px;">1.51644</div><div class="a" style="left:446.90px;top:130.39px;font-size:12.3px;color:#fff;letter-spacing:0.008px;">1.51646</div><div class="a" style="left:496.00px;top:130.39px;font-size:12.3px;color:#fff;letter-spacing:0.008px;">1.51622</div><div class="a" style="left:546.00px;top:130.39px;font-size:12.3px;color:#fff;letter-spacing:0.008px;">1.51630</div><div class="a" style="left:312.50px;top:236.14px;font-size:12.59px;color:#fff;letter-spacing:-0.003px;">#13304110 sell 0.10</div><div class="a" style="left:312.50px;top:362.23px;font-size:12.49px;color:#fff;letter-spacing:-0.006px;">#13303709 sell 0.10</div><div class="a" style="left:1865.80px;top:153.29px;font-size:12.53px;color:#fff;letter-spacing:-0.008px;">1.52135</div><div class="a" style="left:1865.80px;top:202.79px;font-size:12.53px;color:#fff;letter-spacing:-0.008px;">1.52050</div><div class="a" style="left:1865.80px;top:251.99px;font-size:12.53px;color:#fff;letter-spacing:-0.008px;">1.51965</div><div class="a" style="left:1865.80px;top:301.29px;font-size:12.53px;color:#fff;letter-spacing:-0.008px;">1.51880</div><div class="a" style="left:1865.80px;top:350.59px;font-size:12.53px;color:#fff;letter-spacing:-0.008px;">1.51795</div><div class="a" style="left:1865.80px;top:399.89px;font-size:12.53px;color:#fff;letter-spacing:-0.008px;">1.51710</div><div class="r" style="left:1860px;top:405px;width:56px;height:7px;background:#ff0000;"></div><div class="r" style="left:1860px;top:412px;width:56px;height:14px;background:#dc143c;"></div><div class="a" style="left:1866.00px;top:412.79px;font-size:12.3px;color:#000;letter-spacing:0.008px;">1.51689</div><div class="r" style="left:1860px;top:445px;width:56px;height:14px;background:#fff;"></div><div class="a" style="left:1866.00px;top:445.89px;font-size:12.3px;color:#000;letter-spacing:0.008px;">1.51630</div><div class="a" style="left:303.20px;top:481.47px;font-size:12.32px;color:#fff;letter-spacing:0.017px;">2 Jun 2017</div><div class="a" style="left:399.70px;top:481.35px;font-size:12.46px;color:#fff;letter-spacing:0.005px;">2 Jun 09:39</div><div class="a" style="left:495.70px;top:481.35px;font-size:12.46px;color:#fff;letter-spacing:0.005px;">2 Jun 10:03</div><div class="a" style="left:591.70px;top:481.35px;font-size:12.46px;color:#fff;letter-spacing:0.005px;">2 Jun 10:27</div><div class="a" style="left:687.70px;top:481.35px;font-size:12.46px;color:#fff;letter-spacing:0.005px;">2 Jun 10:51</div><div class="a" style="left:783.70px;top:481.21px;font-size:12.63px;color:#fff;letter-spacing:-0.010px;">2 Jun 11:15</div><div class="a" style="left:879.70px;top:481.21px;font-size:12.63px;color:#fff;letter-spacing:-0.010px;">2 Jun 11:39</div><div class="a" style="left:975.70px;top:481.35px;font-size:12.46px;color:#fff;letter-spacing:0.005px;">2 Jun 12:03</div><div class="a" style="left:1071.70px;top:481.35px;font-size:12.46px;color:#fff;letter-spacing:0.005px;">2 Jun 12:27</div><div class="a" style="left:1167.70px;top:481.35px;font-size:12.46px;color:#fff;letter-spacing:0.005px;">2 Jun 12:51</div><div class="a" style="left:1263.70px;top:481.35px;font-size:12.46px;color:#fff;letter-spacing:0.005px;">2 Jun 13:15</div><div class="a" style="left:1359.70px;top:481.35px;font-size:12.46px;color:#fff;letter-spacing:0.005px;">2 Jun 13:39</div><div class="a" style="left:1455.70px;top:481.35px;font-size:12.46px;color:#fff;letter-spacing:0.005px;">2 Jun 14:03</div><div class="r" style="left:1637px;top:174px;width:32px;height:1px;background:#4f7fe6;"></div><div class="r" style="left:1816px;top:174px;width:32px;height:1px;background:#4f7fe6;"></div><div class="a" style="left:1677.85px;top:167.31px;font-size:12.04px;color:#5080f0;letter-spacing:-0.006px;">www.FOREXROBOT.eu</div><div class="a" style="left:1637.50px;top:178.54px;font-size:14.25px;color:#ffa500;letter-spacing:0.002px;">Margin 5267.40; StopLevel 100.0</div><div class="a" style="left:1666.90px;top:193.36px;font-size:14.46px;color:#ffa500;letter-spacing:0.004px;">Spread 7.0; TickValue 17.35</div><div class="a" style="left:1651.90px;top:208.33px;font-size:14.5px;color:#ffa500;">Swap Long -11.45 / Short 3.30</div><div class="a" style="left:1666.90px;top:223.59px;font-size:14.19px;color:#ffa500;letter-spacing:-0.007px;">MinLot 0.1; Leverage 1 : 500</div><div class="a" style="left:1685.60px;top:238.15px;font-size:14.35px;color:#ffa500;letter-spacing:-0.002px;">0x BUY 0.0 / 3x SELL 0.4</div><div class="a" style="left:1706.90px;top:254.98px;font-size:15.5px;color:#ffa500;font-weight:bold;letter-spacing:1.066px;">Profit -57.11 CZK</div><svg style="left:1540px;top:126px" width="11" height="7" viewBox="0 0 11 7" ><path d="M0 0H11L5.5 6Z" fill="#a0a8b8"/></svg>
<div class="r" style="left:301px;top:500px;width:1619px;height:2px;background:#f8f8f8;"></div><div class="r" style="left:301px;top:502px;width:1617px;height:1px;background:#000;"></div><div class="r" style="left:301px;top:503px;width:1617px;height:24px;background:#f0f0f0;"></div><div class="r" style="left:1010px;top:502px;width:108px;height:24px;background:#fff;border:1px solid #000;border-top:none;"></div><div class="a" style="left:320.40px;top:507.95px;font-size:14px;transform-origin:0 0;transform:scaleX(0.9461);color:#7a7a7a;">EURUSD.,M1</div><div class="a" style="left:432.30px;top:507.95px;font-size:14px;color:#7a7a7a;letter-spacing:-0.189px;">USDCHF.,M5</div><div class="a" style="left:544.20px;top:507.95px;font-size:14px;transform-origin:0 0;transform:scaleX(0.9683);color:#7a7a7a;">EURCZK,Weekly</div><div class="a" style="left:675.00px;top:507.95px;font-size:14px;transform-origin:0 0;transform:scaleX(0.9528);color:#7a7a7a;">GBPUSD.,H4</div><div class="a" style="left:784.40px;top:507.95px;font-size:14px;color:#7a7a7a;letter-spacing:0.175px;">AUDCAD,H4</div><div class="a" style="left:896.50px;top:507.95px;font-size:14px;color:#7a7a7a;letter-spacing:0.025px;">USDCAD.,Daily</div><div class="a" style="left:1023.30px;top:507.95px;font-size:14px;transform-origin:0 0;transform:scaleX(0.9618);color:#000;">EURAUD,M1</div><div class="a" style="left:1131.30px;top:507.95px;font-size:14px;transform-origin:0 0;transform:scaleX(0.9640);color:#7a7a7a;">GBPUSD.,Weekly</div><div class="a" style="left:1268.75px;top:507.95px;font-size:14px;transform-origin:0 0;transform:scaleX(0.9478);color:#7a7a7a;">EURCHF.,H4</div><div class="a" style="left:1376.60px;top:507.95px;font-size:14px;transform-origin:0 0;transform:scaleX(0.9381);color:#7a7a7a;">USDJPY.,H4</div><div class="a" style="left:1479.40px;top:507.95px;font-size:14px;color:#7a7a7a;letter-spacing:0.406px;">AUDNZD,M5</div><div class="r" style="left:418px;top:506px;width:1px;height:18px;background:#808080;"></div><div class="r" style="left:530px;top:506px;width:1px;height:18px;background:#808080;"></div><div class="r" style="left:662px;top:506px;width:1px;height:18px;background:#808080;"></div><div class="r" style="left:770px;top:506px;width:1px;height:18px;background:#808080;"></div><div class="r" style="left:882px;top:506px;width:1px;height:18px;background:#808080;"></div><div class="r" style="left:1254px;top:506px;width:1px;height:18px;background:#808080;"></div><div class="r" style="left:1362px;top:506px;width:1px;height:18px;background:#808080;"></div><div class="r" style="left:1466px;top:506px;width:1px;height:18px;background:#808080;"></div><div class="r" style="left:1578px;top:506px;width:1px;height:18px;background:#808080;"></div><svg style="left:1877px;top:508px" width="8" height="11" viewBox="0 0 8 11" ><path d="M6 1V10L1.5 5.5Z" fill="#a8a8a8"/></svg><svg style="left:1901px;top:508px" width="8" height="11" viewBox="0 0 8 11" ><path d="M2 1V10L6.5 5.5Z" fill="#a8a8a8"/></svg><div class="r" style="left:0px;top:527px;width:1920px;height:2px;background:#fcfcfc;"></div><div class="r" style="left:0px;top:532px;width:1920px;height:1px;background:#a0a0a0;"></div>
<div class="r" style="left:21px;top:533px;width:1893px;height:486px;background:#fff;"></div><div class="r" style="left:20px;top:532px;width:1px;height:487px;background:#a0a0a0;"></div><div class="r" style="left:20px;top:532px;width:1894px;height:1px;background:#a0a0a0;"></div><svg style="left:5px;top:533px" width="11" height="10" viewBox="0 0 11 10" ><path d="M1 1L10 9M10 1L1 9" stroke="#000" stroke-width="1.6"/></svg><div class="r" style="left:3px;top:549px;width:16px;height:497px;background:#a3bedd;"></div><div class="a" style="left:5.2px;top:1043px;font-size:14px;line-height:14px;letter-spacing:0.15px;transform-origin:0 0;transform:rotate(-90deg);color:#000">Terminál</div><div class="r" style="left:21px;top:559px;width:1892px;height:1px;background:#cacaca;"></div><div class="r" style="left:207px;top:533px;width:1px;height:326px;background:#dcdcdc;"></div><div class="r" style="left:466px;top:533px;width:1px;height:326px;background:#dcdcdc;"></div><div class="r" style="left:597px;top:533px;width:1px;height:326px;background:#dcdcdc;"></div><div class="r" style="left:698px;top:533px;width:1px;height:326px;background:#dcdcdc;"></div><div class="r" style="left:828px;top:533px;width:1px;height:326px;background:#dcdcdc;"></div><div class="r" style="left:972px;top:533px;width:1px;height:326px;background:#dcdcdc;"></div><div class="r" style="left:1116px;top:533px;width:1px;height:326px;background:#dcdcdc;"></div><div class="r" style="left:1259px;top:533px;width:1px;height:326px;background:#dcdcdc;"></div><div class="r" style="left:1404px;top:533px;width:1px;height:326px;background:#dcdcdc;"></div><div class="r" style="left:1548px;top:533px;width:1px;height:326px;background:#dcdcdc;"></div><div class="r" style="left:1692px;top:533px;width:1px;height:326px;background:#dcdcdc;"></div><div class="r" style="left:1913px;top:533px;width:1px;height:326px;background:#dcdcdc;"></div><div class="a" style="left:27.50px;top:540.45px;font-size:14px;transform-origin:0 0;transform:scaleX(0.9512);color:#000;">Pokyn</div><div class="a" style="left:76.00px;top:543.23px;font-size:8px;color:#909090;">/</div><div class="a" style="left:439.30px;top:540.45px;font-size:14px;transform-origin:0 0;transform:scaleX(0.9036);color:#000;">Čas</div><div class="a" style="left:569.40px;top:540.45px;font-size:14px;color:#000;letter-spacing:-0.275px;">Typ</div><div class="a" style="left:664.40px;top:540.45px;font-size:14px;color:#000;letter-spacing:0.250px;">Lotů</div><div class="a" style="left:773.40px;top:540.45px;font-size:14px;color:#000;letter-spacing:0.360px;">Symbol</div><div class="a" style="left:934.40px;top:540.45px;font-size:14px;transform-origin:0 0;transform:scaleX(0.9612);color:#000;">Cena</div><div class="a" style="left:1081.90px;top:540.45px;font-size:14px;color:#000;letter-spacing:0.050px;">S / L</div><div class="a" style="left:1158.30px;top:540.45px;font-size:14px;color:#000;letter-spacing:0.257px;">Realizovat zisk</div><div class="a" style="left:1366.20px;top:540.45px;font-size:14px;transform-origin:0 0;transform:scaleX(0.9642);color:#000;">Cena</div><div class="a" style="left:1495.40px;top:540.45px;font-size:14px;color:#000;letter-spacing:0.117px;">Provize</div><div class="a" style="left:1651.00px;top:540.45px;font-size:14px;color:#000;letter-spacing:0.167px;">Swap</div><div class="a" style="left:1882.20px;top:540.45px;font-size:14px;color:#000;letter-spacing:0.033px;">Zisk</div><div class="r" style="left:21px;top:584px;width:1892px;height:1px;background:#cacaca;"></div><svg style="left:23px;top:562px" width="20" height="20" viewBox="0 0 20 20" ><path d="M2.5 1.5H11.5L15.5 5.5V17.5H2.5Z" fill="#fbfbfb" stroke="#7a7a7a" stroke-width="1.3"/><path d="M11.5 2V5.5H15" fill="none" stroke="#7a7a7a"/><circle cx="15" cy="16" r="4" fill="#1e90e8" stroke="#fff" stroke-width="0.5"/></svg><div class="a" style="left:49.20px;top:565.15px;font-size:14px;color:#000;letter-spacing:-0.043px;">13270653</div><div class="a" style="left:334.15px;top:565.15px;font-size:14px;color:#000;">2017.05.24 17:09:44</div><div class="a" style="left:569.95px;top:565.15px;font-size:14px;color:#000;">buy</div><div class="a" style="left:666.55px;top:565.15px;font-size:14px;color:#000;">0.20</div><div class="a" style="left:777.45px;top:565.15px;font-size:14px;color:#000;">audcad</div><div class="a" style="left:917.20px;top:565.15px;font-size:14px;color:#000;">1.00669</div><div class="a" style="left:1061.30px;top:565.15px;font-size:14px;color:#000;">0.00000</div><div class="a" style="left:1204.70px;top:565.15px;font-size:14px;color:#000;">1.00683</div><div class="a" style="left:1348.90px;top:565.15px;font-size:14px;color:#000;">0.99999</div><div class="a" style="left:1516.55px;top:565.15px;font-size:14px;color:#000;">0.00</div><div class="a" style="left:1660.25px;top:565.15px;font-size:14px;color:#000;">5.39</div><div class="a" style="left:1824.65px;top:565.15px;font-size:14px;color:#000;">-2 324.98</div><svg style="left:1894px;top:565px" width="14" height="14" viewBox="0 0 14 14" ><path d="M1 1L13 13M13 1L1 13" stroke="#555" stroke-width="1.5"/></svg><div class="r" style="left:21px;top:585px;width:1892px;height:24px;background:#eaeaea;"></div><div class="r" style="left:21px;top:609px;width:1892px;height:1px;background:#cacaca;"></div><svg style="left:23px;top:587px" width="20" height="20" viewBox="0 0 20 20" ><path d="M2.5 1.5H11.5L15.5 5.5V17.5H2.5Z" fill="#fbfbfb" stroke="#7a7a7a" stroke-width="1.3"/><path d="M11.5 2V5.5H15" fill="none" stroke="#7a7a7a"/><circle cx="15" cy="16" r="4" fill="#1e90e8" stroke="#fff" stroke-width="0.5"/></svg><div class="a" style="left:49.20px;top:590.15px;font-size:14px;color:#000;letter-spacing:-0.043px;">13293840</div><div class="a" style="left:335.20px;top:590.15px;font-size:14px;color:#000;">2017.05.29 11:31:16</div><div class="a" style="left:569.95px;top:590.15px;font-size:14px;color:#000;">buy</div><div class="a" style="left:666.55px;top:590.15px;font-size:14px;color:#000;">0.10</div><div class="a" style="left:777.45px;top:590.15px;font-size:14px;color:#000;">audcad</div><div class="a" style="left:918.25px;top:590.15px;font-size:14px;color:#000;">1.00118</div><div class="a" style="left:1061.30px;top:590.15px;font-size:14px;color:#000;">0.00000</div><div class="a" style="left:1204.70px;top:590.15px;font-size:14px;color:#000;">1.00683</div><div class="a" style="left:1348.90px;top:590.15px;font-size:14px;color:#000;">0.99999</div><div class="a" style="left:1516.55px;top:590.15px;font-size:14px;color:#000;">0.00</div><div class="a" style="left:1660.25px;top:590.15px;font-size:14px;color:#000;">1.47</div><div class="a" style="left:1836.30px;top:590.15px;font-size:14px;color:#000;">-206.47</div><svg style="left:1894px;top:590px" width="14" height="14" viewBox="0 0 14 14" ><path d="M1 1L13 13M13 1L1 13" stroke="#555" stroke-width="1.5"/></svg><div class="r" style="left:21px;top:634px;width:1892px;height:1px;background:#cacaca;"></div><svg style="left:23px;top:612px" width="20" height="20" viewBox="0 0 20 20" ><path d="M2.5 1.5H11.5L15.5 5.5V17.5H2.5Z" fill="#fbfbfb" stroke="#7a7a7a" stroke-width="1.3"/><path d="M11.5 2V5.5H15" fill="none" stroke="#7a7a7a"/><circle cx="15" cy="16" r="4" fill="#e8401a" stroke="#fff" stroke-width="0.5"/></svg><div class="a" style="left:49.20px;top:615.15px;font-size:14px;color:#000;letter-spacing:-0.043px;">13298995</div><div class="a" style="left:334.15px;top:615.15px;font-size:14px;color:#000;">2017.05.31 08:34:25</div><div class="a" style="left:571.50px;top:615.15px;font-size:14px;color:#000;">sell</div><div class="a" style="left:666.55px;top:615.15px;font-size:14px;color:#000;">0.10</div><div class="a" style="left:776.70px;top:615.15px;font-size:14px;color:#000;">eurusd.</div><div class="a" style="left:918.25px;top:615.15px;font-size:14px;color:#000;">1.11714</div><div class="a" style="left:1061.30px;top:615.15px;font-size:14px;color:#000;">0.00000</div><div class="a" style="left:1205.75px;top:615.15px;font-size:14px;color:#000;">1.11674</div><div class="a" style="left:1348.90px;top:615.15px;font-size:14px;color:#000;">1.12150</div><div class="a" style="left:1516.55px;top:615.15px;font-size:14px;color:#000;">0.00</div><div class="a" style="left:1660.25px;top:615.15px;font-size:14px;color:#000;">2.35</div><div class="a" style="left:1824.65px;top:615.15px;font-size:14px;color:#000;">-1 024.65</div><svg style="left:1894px;top:615px" width="14" height="14" viewBox="0 0 14 14" ><path d="M1 1L13 13M13 1L1 13" stroke="#555" stroke-width="1.5"/></svg><div class="r" style="left:21px;top:635px;width:1892px;height:24px;background:#eaeaea;"></div><div class="r" style="left:21px;top:659px;width:1892px;height:1px;background:#cacaca;"></div><svg style="left:23px;top:637px" width="20" height="20" viewBox="0 0 20 20" ><path d="M2.5 1.5H11.5L15.5 5.5V17.5H2.5Z" fill="#fbfbfb" stroke="#7a7a7a" stroke-width="1.3"/><path d="M11.5 2V5.5H15" fill="none" stroke="#7a7a7a"/><circle cx="15" cy="16" r="4" fill="#e8401a" stroke="#fff" stroke-width="0.5"/></svg><div class="a" style="left:49.20px;top:640.15px;font-size:14px;color:#000;letter-spacing:-0.043px;">13303010</div><div class="a" style="left:334.15px;top:640.15px;font-size:14px;color:#000;">2017.06.01 10:27:14</div><div class="a" style="left:571.50px;top:640.15px;font-size:14px;color:#000;">sell</div><div class="a" style="left:666.55px;top:640.15px;font-size:14px;color:#000;">0.14</div><div class="a" style="left:776.70px;top:640.15px;font-size:14px;color:#000;">eurusd.</div><div class="a" style="left:917.20px;top:640.15px;font-size:14px;color:#000;">1.12335</div><div class="a" style="left:1061.30px;top:640.15px;font-size:14px;color:#000;">0.00000</div><div class="a" style="left:1205.75px;top:640.15px;font-size:14px;color:#000;">1.11674</div><div class="a" style="left:1348.90px;top:640.15px;font-size:14px;color:#000;">1.12150</div><div class="a" style="left:1516.55px;top:640.15px;font-size:14px;color:#000;">0.00</div><div class="a" style="left:1660.25px;top:640.15px;font-size:14px;color:#000;">0.82</div><div class="a" style="left:1841.00px;top:640.15px;font-size:14px;color:#000;">608.68</div><svg style="left:1894px;top:640px" width="14" height="14" viewBox="0 0 14 14" ><path d="M1 1L13 13M13 1L1 13" stroke="#555" stroke-width="1.5"/></svg><div class="r" style="left:21px;top:684px;width:1892px;height:1px;background:#cacaca;"></div><svg style="left:23px;top:662px" width="20" height="20" viewBox="0 0 20 20" ><path d="M2.5 1.5H11.5L15.5 5.5V17.5H2.5Z" fill="#fbfbfb" stroke="#7a7a7a" stroke-width="1.3"/><path d="M11.5 2V5.5H15" fill="none" stroke="#7a7a7a"/><circle cx="15" cy="16" r="4" fill="#e8401a" stroke="#fff" stroke-width="0.5"/></svg><div class="a" style="left:49.20px;top:665.15px;font-size:14px;color:#000;letter-spacing:0.107px;">13303011</div><div class="a" style="left:334.15px;top:665.15px;font-size:14px;color:#000;">2017.06.01 10:28:20</div><div class="a" style="left:571.50px;top:665.15px;font-size:14px;color:#000;">sell</div><div class="a" style="left:666.55px;top:665.15px;font-size:14px;color:#000;">0.20</div><div class="a" style="left:779.80px;top:665.15px;font-size:14px;color:#000;">euraud</div><div class="a" style="left:917.20px;top:665.15px;font-size:14px;color:#000;">1.51504</div><div class="a" style="left:1061.30px;top:665.15px;font-size:14px;color:#000;">0.00000</div><div class="a" style="left:1204.70px;top:665.15px;font-size:14px;color:#000;">1.50284</div><div class="a" style="left:1348.90px;top:665.15px;font-size:14px;color:#000;">1.51700</div><div class="a" style="left:1516.55px;top:665.15px;font-size:14px;color:#000;">0.00</div><div class="a" style="left:1653.50px;top:665.15px;font-size:14px;color:#000;">11.42</div><div class="a" style="left:1836.30px;top:665.15px;font-size:14px;color:#000;">-681.31</div><svg style="left:1894px;top:665px" width="14" height="14" viewBox="0 0 14 14" ><path d="M1 1L13 13M13 1L1 13" stroke="#555" stroke-width="1.5"/></svg><div class="r" style="left:21px;top:685px;width:1892px;height:24px;background:#eaeaea;"></div><div class="r" style="left:21px;top:709px;width:1892px;height:1px;background:#cacaca;"></div><svg style="left:23px;top:687px" width="20" height="20" viewBox="0 0 20 20" ><path d="M2.5 1.5H11.5L15.5 5.5V17.5H2.5Z" fill="#fbfbfb" stroke="#7a7a7a" stroke-width="1.3"/><path d="M11.5 2V5.5H15" fill="none" stroke="#7a7a7a"/><circle cx="15" cy="16" r="4" fill="#e8401a" stroke="#fff" stroke-width="0.5"/></svg><div class="a" style="left:49.20px;top:690.15px;font-size:14px;color:#000;letter-spacing:-0.043px;">13303014</div><div class="a" style="left:334.15px;top:690.15px;font-size:14px;color:#000;">2017.06.01 10:29:17</div><div class="a" style="left:571.50px;top:690.15px;font-size:14px;color:#000;">sell</div><div class="a" style="left:666.55px;top:690.15px;font-size:14px;color:#000;">0.10</div><div class="a" style="left:773.60px;top:690.15px;font-size:14px;color:#000;">gbpusd.</div><div class="a" style="left:917.20px;top:690.15px;font-size:14px;color:#000;">1.28601</div><div class="a" style="left:1061.30px;top:690.15px;font-size:14px;color:#000;">1.31882</div><div class="a" style="left:1204.70px;top:690.15px;font-size:14px;color:#000;">1.27387</div><div class="a" style="left:1348.90px;top:690.15px;font-size:14px;color:#000;">1.28544</div><div class="a" style="left:1516.55px;top:690.15px;font-size:14px;color:#000;">0.00</div><div class="a" style="left:1655.60px;top:690.15px;font-size:14px;color:#000;">-5.68</div><div class="a" style="left:1841.00px;top:690.15px;font-size:14px;color:#000;">133.96</div><svg style="left:1894px;top:690px" width="14" height="14" viewBox="0 0 14 14" ><path d="M1 1L13 13M13 1L1 13" stroke="#555" stroke-width="1.5"/></svg><div class="r" style="left:21px;top:734px;width:1892px;height:1px;background:#cacaca;"></div><svg style="left:23px;top:712px" width="20" height="20" viewBox="0 0 20 20" ><path d="M2.5 1.5H11.5L15.5 5.5V17.5H2.5Z" fill="#fbfbfb" stroke="#7a7a7a" stroke-width="1.3"/><path d="M11.5 2V5.5H15" fill="none" stroke="#7a7a7a"/><circle cx="15" cy="16" r="4" fill="#e8401a" stroke="#fff" stroke-width="0.5"/></svg><div class="a" style="left:49.20px;top:715.15px;font-size:14px;color:#000;letter-spacing:-0.043px;">13303709</div><div class="a" style="left:334.15px;top:715.15px;font-size:14px;color:#000;">2017.06.01 14:42:53</div><div class="a" style="left:571.50px;top:715.15px;font-size:14px;color:#000;">sell</div><div class="a" style="left:666.55px;top:715.15px;font-size:14px;color:#000;">0.10</div><div class="a" style="left:779.80px;top:715.15px;font-size:14px;color:#000;">euraud</div><div class="a" style="left:917.20px;top:715.15px;font-size:14px;color:#000;">1.51765</div><div class="a" style="left:1061.30px;top:715.15px;font-size:14px;color:#000;">0.00000</div><div class="a" style="left:1204.70px;top:715.15px;font-size:14px;color:#000;">1.51038</div><div class="a" style="left:1348.90px;top:715.15px;font-size:14px;color:#000;">1.51700</div><div class="a" style="left:1516.55px;top:715.15px;font-size:14px;color:#000;">0.00</div><div class="a" style="left:1660.25px;top:715.15px;font-size:14px;color:#000;">5.71</div><div class="a" style="left:1842.00px;top:715.15px;font-size:14px;color:#000;">112.97</div><svg style="left:1894px;top:715px" width="14" height="14" viewBox="0 0 14 14" ><path d="M1 1L13 13M13 1L1 13" stroke="#555" stroke-width="1.5"/></svg><div class="r" style="left:21px;top:735px;width:1892px;height:24px;background:#eaeaea;"></div><div class="r" style="left:21px;top:759px;width:1892px;height:1px;background:#cacaca;"></div><svg style="left:23px;top:737px" width="20" height="20" viewBox="0 0 20 20" ><path d="M2.5 1.5H11.5L15.5 5.5V17.5H2.5Z" fill="#fbfbfb" stroke="#7a7a7a" stroke-width="1.3"/><path d="M11.5 2V5.5H15" fill="none" stroke="#7a7a7a"/><circle cx="15" cy="16" r="4" fill="#e8401a" stroke="#fff" stroke-width="0.5"/></svg><div class="a" style="left:49.20px;top:740.15px;font-size:14px;color:#000;letter-spacing:0.107px;">13304110</div><div class="a" style="left:334.15px;top:740.15px;font-size:14px;color:#000;">2017.06.01 16:24:12</div><div class="a" style="left:571.50px;top:740.15px;font-size:14px;color:#000;">sell</div><div class="a" style="left:666.55px;top:740.15px;font-size:14px;color:#000;">0.10</div><div class="a" style="left:779.80px;top:740.15px;font-size:14px;color:#000;">euraud</div><div class="a" style="left:917.20px;top:740.15px;font-size:14px;color:#000;">1.51981</div><div class="a" style="left:1061.30px;top:740.15px;font-size:14px;color:#000;">0.00000</div><div class="a" style="left:1204.70px;top:740.15px;font-size:14px;color:#000;">1.51434</div><div class="a" style="left:1348.90px;top:740.15px;font-size:14px;color:#000;">1.51700</div><div class="a" style="left:1516.55px;top:740.15px;font-size:14px;color:#000;">0.00</div><div class="a" style="left:1660.25px;top:740.15px;font-size:14px;color:#000;">5.71</div><div class="a" style="left:1841.00px;top:740.15px;font-size:14px;color:#000;">488.39</div><svg style="left:1894px;top:740px" width="14" height="14" viewBox="0 0 14 14" ><path d="M1 1L13 13M13 1L1 13" stroke="#555" stroke-width="1.5"/></svg><div class="r" style="left:21px;top:784px;width:1892px;height:1px;background:#cacaca;"></div><svg style="left:23px;top:762px" width="20" height="20" viewBox="0 0 20 20" ><path d="M2.5 1.5H11.5L15.5 5.5V17.5H2.5Z" fill="#fbfbfb" stroke="#7a7a7a" stroke-width="1.3"/><path d="M11.5 2V5.5H15" fill="none" stroke="#7a7a7a"/><circle cx="15" cy="16" r="4" fill="#e8401a" stroke="#fff" stroke-width="0.5"/></svg><div class="a" style="left:49.20px;top:765.15px;font-size:14px;color:#000;letter-spacing:0.257px;">13304111</div><div class="a" style="left:334.15px;top:765.15px;font-size:14px;color:#000;">2017.06.01 16:24:31</div><div class="a" style="left:571.50px;top:765.15px;font-size:14px;color:#000;">sell</div><div class="a" style="left:666.55px;top:765.15px;font-size:14px;color:#000;">0.10</div><div class="a" style="left:776.70px;top:765.15px;font-size:14px;color:#000;">eurusd.</div><div class="a" style="left:917.20px;top:765.15px;font-size:14px;color:#000;">1.12160</div><div class="a" style="left:1061.30px;top:765.15px;font-size:14px;color:#000;">0.00000</div><div class="a" style="left:1204.70px;top:765.15px;font-size:14px;color:#000;">1.12045</div><div class="a" style="left:1348.90px;top:765.15px;font-size:14px;color:#000;">1.12150</div><div class="a" style="left:1516.55px;top:765.15px;font-size:14px;color:#000;">0.00</div><div class="a" style="left:1660.25px;top:765.15px;font-size:14px;color:#000;">0.59</div><div class="a" style="left:1848.75px;top:765.15px;font-size:14px;color:#000;">23.50</div><svg style="left:1894px;top:765px" width="14" height="14" viewBox="0 0 14 14" ><path d="M1 1L13 13M13 1L1 13" stroke="#555" stroke-width="1.5"/></svg><div class="r" style="left:21px;top:785px;width:1892px;height:24px;background:#eaeaea;"></div><div class="r" style="left:21px;top:809px;width:1892px;height:1px;background:#cacaca;"></div><div class="r" style="left:1117px;top:785px;width:142px;height:24px;background:#66ee66;"></div><svg style="left:23px;top:787px" width="20" height="20" viewBox="0 0 20 20" ><path d="M2.5 1.5H11.5L15.5 5.5V17.5H2.5Z" fill="#fbfbfb" stroke="#7a7a7a" stroke-width="1.3"/><path d="M11.5 2V5.5H15" fill="none" stroke="#7a7a7a"/><circle cx="15" cy="16" r="4" fill="#e8401a" stroke="#fff" stroke-width="0.5"/></svg><div class="a" style="left:49.20px;top:790.15px;font-size:14px;color:#000;letter-spacing:-0.043px;">13306436</div><div class="a" style="left:335.20px;top:790.15px;font-size:14px;color:#000;">2017.06.02 11:27:19</div><div class="a" style="left:571.50px;top:790.15px;font-size:14px;color:#000;">sell</div><div class="a" style="left:666.55px;top:790.15px;font-size:14px;color:#000;">0.20</div><div class="a" style="left:776.70px;top:790.15px;font-size:14px;color:#000;">eurusd.</div><div class="a" style="left:917.20px;top:790.15px;font-size:14px;color:#000;">1.12236</div><div class="a" style="left:1061.30px;top:790.15px;font-size:14px;color:#000;">1.12640</div><div class="a" style="left:1204.70px;top:790.15px;font-size:14px;color:#000;">1.12083</div><div class="a" style="left:1348.90px;top:790.15px;font-size:14px;color:#000;">1.12150</div><div class="a" style="left:1516.55px;top:790.15px;font-size:14px;color:#000;">0.00</div><div class="a" style="left:1660.25px;top:790.15px;font-size:14px;color:#000;">0.00</div><div class="a" style="left:1841.00px;top:790.15px;font-size:14px;color:#000;">404.22</div><svg style="left:1894px;top:790px" width="14" height="14" viewBox="0 0 14 14" ><path d="M1 1L13 13M13 1L1 13" stroke="#555" stroke-width="1.5"/></svg><div class="r" style="left:21px;top:834px;width:1892px;height:1px;background:#cacaca;"></div><svg style="left:23px;top:812px" width="20" height="20" viewBox="0 0 20 20" ><path d="M2.5 1.5H11.5L15.5 5.5V17.5H2.5Z" fill="#fbfbfb" stroke="#7a7a7a" stroke-width="1.3"/><path d="M11.5 2V5.5H15" fill="none" stroke="#7a7a7a"/><circle cx="15" cy="16" r="4" fill="#e8401a" stroke="#fff" stroke-width="0.5"/></svg><div class="a" style="left:49.20px;top:815.15px;font-size:14px;color:#000;letter-spacing:-0.043px;">13306597</div><div class="a" style="left:334.15px;top:815.15px;font-size:14px;color:#000;">2017.06.02 12:29:30</div><div class="a" style="left:571.50px;top:815.15px;font-size:14px;color:#000;">sell</div><div class="a" style="left:667.60px;top:815.15px;font-size:14px;color:#000;">0.11</div><div class="a" style="left:780.10px;top:815.15px;font-size:14px;color:#000;">usdjpy.</div><div class="a" style="left:919.25px;top:815.15px;font-size:14px;color:#000;">111.525</div><div class="a" style="left:1063.35px;top:815.15px;font-size:14px;color:#000;">111.787</div><div class="a" style="left:1206.75px;top:815.15px;font-size:14px;color:#000;">111.379</div><div class="a" style="left:1350.95px;top:815.15px;font-size:14px;color:#000;">111.517</div><div class="a" style="left:1516.55px;top:815.15px;font-size:14px;color:#000;">0.00</div><div class="a" style="left:1660.25px;top:815.15px;font-size:14px;color:#000;">0.00</div><div class="a" style="left:1848.75px;top:815.15px;font-size:14px;color:#000;">18.55</div><svg style="left:1894px;top:815px" width="14" height="14" viewBox="0 0 14 14" ><path d="M1 1L13 13M13 1L1 13" stroke="#555" stroke-width="1.5"/></svg><div class="r" style="left:21px;top:835px;width:1892px;height:24px;background:#eaeaea;"></div><div class="r" style="left:21px;top:859px;width:1892px;height:1px;background:#cacaca;"></div><svg style="left:23px;top:837px" width="20" height="20" viewBox="0 0 20 20" ><path d="M2.5 1.5H11.5L15.5 5.5V17.5H2.5Z" fill="#fbfbfb" stroke="#7a7a7a" stroke-width="1.3"/><path d="M11.5 2V5.5H15" fill="none" stroke="#7a7a7a"/><circle cx="15" cy="16" r="4" fill="#1e90e8" stroke="#fff" stroke-width="0.5"/></svg><div class="a" style="left:49.20px;top:840.15px;font-size:14px;color:#000;letter-spacing:-0.043px;">13306602</div><div class="a" style="left:334.15px;top:840.15px;font-size:14px;color:#000;">2017.06.02 12:30:20</div><div class="a" style="left:569.95px;top:840.15px;font-size:14px;color:#000;">buy</div><div class="a" style="left:667.60px;top:840.15px;font-size:14px;color:#000;">0.11</div><div class="a" style="left:777.45px;top:840.15px;font-size:14px;color:#000;">audnzd</div><div class="a" style="left:917.20px;top:840.15px;font-size:14px;color:#000;">1.04229</div><div class="a" style="left:1061.30px;top:840.15px;font-size:14px;color:#000;">0.00000</div><div class="a" style="left:1204.70px;top:840.15px;font-size:14px;color:#000;">0.00000</div><div class="a" style="left:1348.90px;top:840.15px;font-size:14px;color:#000;">1.04316</div><div class="a" style="left:1516.55px;top:840.15px;font-size:14px;color:#000;">0.00</div><div class="a" style="left:1660.25px;top:840.15px;font-size:14px;color:#000;">0.00</div><div class="a" style="left:1841.00px;top:840.15px;font-size:14px;color:#000;">159.08</div><svg style="left:1894px;top:840px" width="14" height="14" viewBox="0 0 14 14" ><path d="M1 1L13 13M13 1L1 13" stroke="#555" stroke-width="1.5"/></svg><div class="r" style="left:21px;top:859px;width:1892px;height:25px;background:#c8c8c8;"></div><svg style="left:24px;top:863px" width="16" height="18" viewBox="0 0 16 18" ><rect x="1.5" y="1.5" width="13" height="15" fill="#fcfcfc" stroke="#808080"/><path d="M6 5H10V9H12.5L8 13.5L3.5 9H6Z" fill="#e03a10"/></svg><div class="a" style="left:48.00px;top:864.65px;font-size:14px;color:#000;font-weight:bold;letter-spacing:0.532px;">Zůstatek: 42 270.19 CZK</div><div class="a" style="left:229.50px;top:864.65px;font-size:14px;color:#000;font-weight:bold;letter-spacing:0.738px;">Majetek: 40 009.91</div><div class="a" style="left:373.75px;top:864.65px;font-size:14px;color:#000;font-weight:bold;letter-spacing:0.643px;">Marže: 7 518.08</div><div class="a" style="left:494.60px;top:864.65px;font-size:14px;color:#000;font-weight:bold;letter-spacing:0.523px;">Dostupná marže: 32 491.83</div><div class="a" style="left:696.70px;top:864.65px;font-size:14px;color:#000;font-weight:bold;letter-spacing:0.397px;">Výška marže: 532.18%</div><div class="a" style="left:1816.80px;top:864.65px;font-size:14px;color:#000;font-weight:bold;letter-spacing:0.981px;">-2 260.28</div><div class="r" style="left:21px;top:1018px;width:1893px;height:1px;background:#000;"></div><div class="r" style="left:23px;top:1018px;width:78px;height:25px;background:#fff;border:1px solid #000;border-top:none;"></div><div class="a" style="left:35.40px;top:1024.45px;font-size:14px;color:#000;letter-spacing:0.810px;">Obchod</div><div class="a" style="left:114.60px;top:1024.45px;font-size:14px;color:#7a7a7a;letter-spacing:0.229px;">Expozice</div><div class="a" style="left:198.00px;top:1024.45px;font-size:14px;color:#7a7a7a;letter-spacing:0.500px;">Historie účtu</div><div class="a" style="left:307.30px;top:1024.45px;font-size:14px;color:#7a7a7a;letter-spacing:0.380px;">Zprávy</div><div class="a" style="left:394.00px;top:1024.45px;font-size:14px;color:#7a7a7a;letter-spacing:0.690px;">Alarmy</div><div class="a" style="left:466.00px;top:1024.45px;font-size:14px;color:#7a7a7a;letter-spacing:0.037px;">Poštovní schránka</div><div class="a" style="left:618.00px;top:1024.45px;font-size:14px;color:#7a7a7a;letter-spacing:0.750px;">Obchod</div><div class="a" style="left:696.40px;top:1024.45px;font-size:14px;color:#7a7a7a;letter-spacing:0.242px;">Signály</div><div class="a" style="left:769.00px;top:1024.45px;font-size:14px;color:#7a7a7a;letter-spacing:0.329px;">Knihovna</div><div class="a" style="left:854.70px;top:1024.45px;font-size:14px;color:#7a7a7a;letter-spacing:0.481px;">Strategie</div><div class="a" style="left:940.00px;top:1024.45px;font-size:14px;color:#7a7a7a;letter-spacing:0.250px;">Deník</div><div class="a" style="left:355.00px;top:1028.73px;font-size:12.13px;color:#e00000;font-weight:bold;">99</div><div class="a" style="left:586.00px;top:1029.27px;font-size:11.5px;color:#e00000;font-weight:bold;">2</div><div class="r" style="left:185px;top:1022px;width:1px;height:19px;background:#808080;"></div><div class="r" style="left:294px;top:1022px;width:1px;height:19px;background:#808080;"></div><div class="r" style="left:381px;top:1022px;width:1px;height:19px;background:#808080;"></div><div class="r" style="left:453px;top:1022px;width:1px;height:19px;background:#808080;"></div><div class="r" style="left:605px;top:1022px;width:1px;height:19px;background:#808080;"></div><div class="r" style="left:683px;top:1022px;width:1px;height:19px;background:#808080;"></div><div class="r" style="left:756px;top:1022px;width:1px;height:19px;background:#808080;"></div><div class="r" style="left:842px;top:1022px;width:1px;height:19px;background:#808080;"></div><div class="r" style="left:928px;top:1022px;width:1px;height:19px;background:#808080;"></div><div class="r" style="left:989px;top:1022px;width:1px;height:19px;background:#808080;"></div><div class="r" style="left:1914px;top:533px;width:1px;height:512px;background:#fcfcfc;"></div><div class="r" style="left:21px;top:1045px;width:1893px;height:1px;background:#fcfcfc;"></div>
<div class="r" style="left:0px;top:1049px;width:1920px;height:1px;background:#a0a0a0;"></div><div class="r" style="left:0px;top:1050px;width:1920px;height:1px;background:#fcfcfc;"></div><div class="a" style="left:2.60px;top:1060.85px;font-size:14px;color:#000;letter-spacing:0.170px;">Pro pomoc, stiskněte F1</div><div class="r" style="left:1047px;top:1055px;width:1px;height:23px;background:#a0a0a0;"></div><div class="r" style="left:1196px;top:1055px;width:1px;height:23px;background:#a0a0a0;"></div><div class="r" style="left:1327px;top:1055px;width:1px;height:23px;background:#a0a0a0;"></div><div class="r" style="left:1416px;top:1055px;width:1px;height:23px;background:#a0a0a0;"></div><div class="r" style="left:1505px;top:1055px;width:1px;height:23px;background:#a0a0a0;"></div><div class="r" style="left:1591px;top:1055px;width:1px;height:23px;background:#a0a0a0;"></div><div class="r" style="left:1677px;top:1055px;width:1px;height:23px;background:#a0a0a0;"></div><div class="r" style="left:1761px;top:1055px;width:1px;height:23px;background:#a0a0a0;"></div><div class="a" style="left:1053.50px;top:1060.65px;font-size:14px;color:#000;letter-spacing:0.692px;">Default</div><svg style="left:1767px;top:1058px" width="32" height="16" viewBox="0 0 32 16" ><rect x="0" y="0" width="3" height="16" fill="#5a7800"/><rect x="0" y="11" width="3" height="5" fill="#00385a"/><rect x="4" y="0" width="3" height="16" fill="#5a7800"/><rect x="4" y="10" width="3" height="6" fill="#00385a"/><rect x="8" y="0" width="3" height="16" fill="#5a7800"/><rect x="8" y="9" width="3" height="7" fill="#00385a"/><rect x="12" y="0" width="3" height="16" fill="#5a7800"/><rect x="12" y="8" width="3" height="8" fill="#00385a"/><rect x="16" y="0" width="3" height="16" fill="#5a7800"/><rect x="16" y="7" width="3" height="9" fill="#00385a"/><rect x="20" y="0" width="3" height="16" fill="#5a7800"/><rect x="20" y="6" width="3" height="10" fill="#00385a"/><rect x="24" y="0" width="3" height="16" fill="#5a7800"/><rect x="24" y="4" width="3" height="12" fill="#00385a"/><rect x="28" y="0" width="3" height="16" fill="#5a7800"/><rect x="28" y="4" width="3" height="12" fill="#00385a"/></svg><div class="a" style="left:1803.00px;top:1060.65px;font-size:14px;color:#000;letter-spacing:0.614px;">750/2 kb</div><div class="r" style="left:0px;top:1078px;width:1920px;height:2px;background:#1a1a1a;"></div></body></html>
